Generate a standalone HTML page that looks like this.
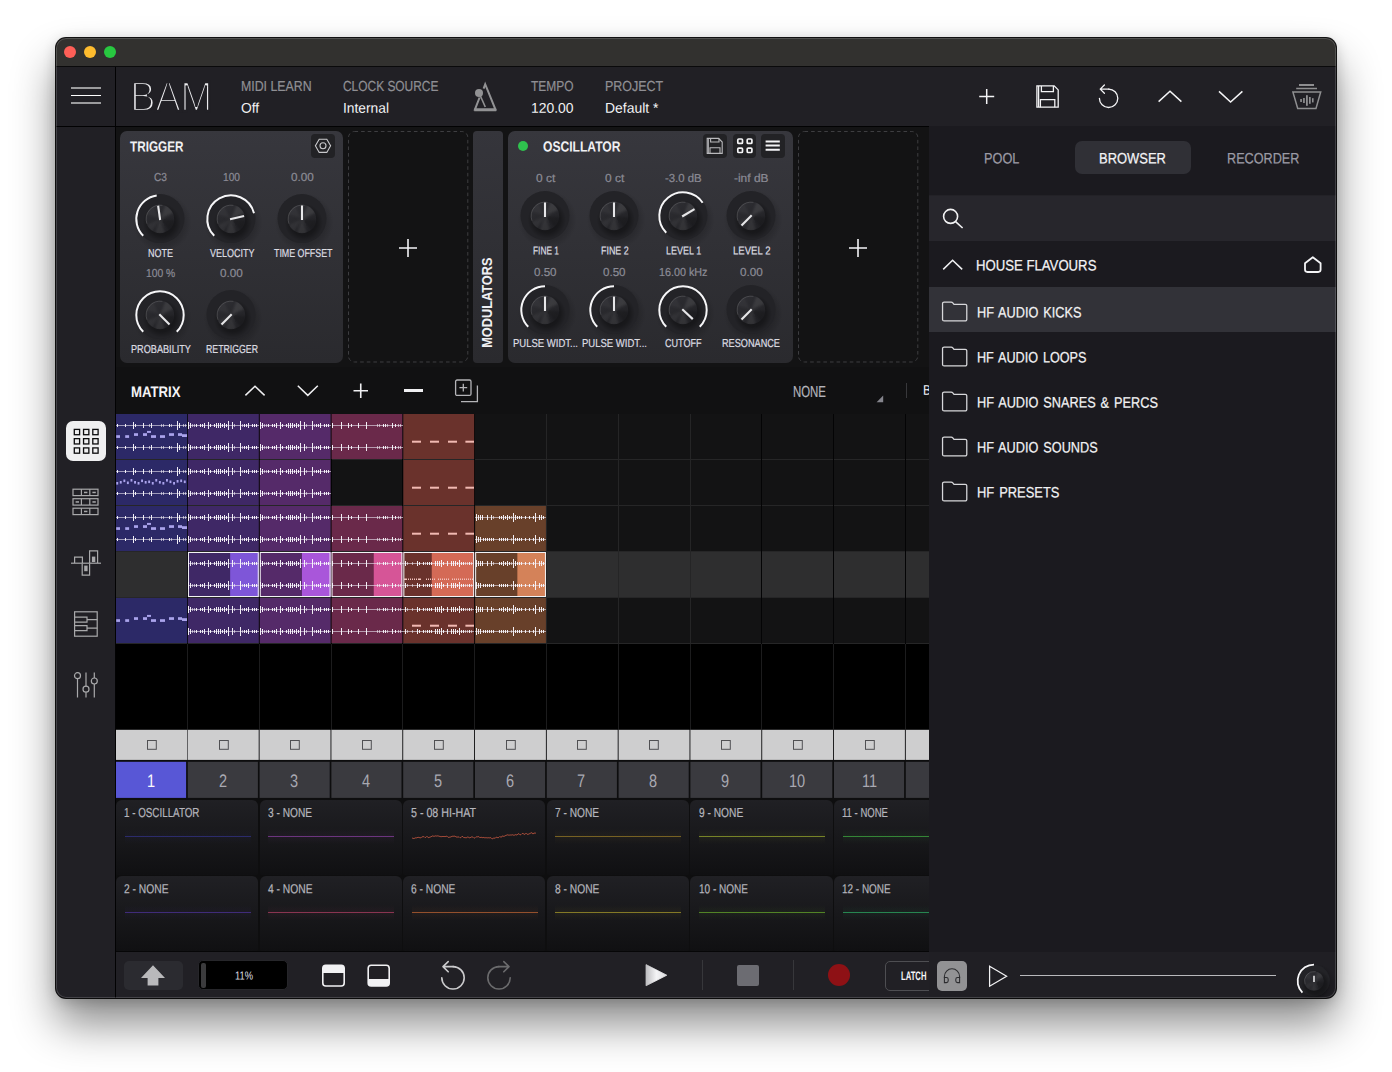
<!DOCTYPE html>
<html lang="en"><head><meta charset="utf-8"><title>BAM</title>
<style>
html,body{margin:0;padding:0;background:#fff;}
body{width:1392px;height:1072px;position:relative;overflow:hidden;font-family:"Liberation Sans",sans-serif;}
.b{position:absolute;display:block;}
.m{-webkit-text-stroke:0.22px currentColor;}
.t{position:absolute;display:block;white-space:nowrap;transform-origin:0 0;font-family:"Liberation Sans",sans-serif;}
#win{position:absolute;border-radius:10px;box-shadow:0 0 0 1px rgba(0,0,0,.92),0 26px 44px rgba(0,0,0,.46),0 3px 14px rgba(0,0,0,.19);background:#1e1d22;}
#app{position:absolute;border-radius:10px;overflow:hidden;}

</style></head><body>
<div id="win" style="left:56px;top:38px;width:1280px;height:960px"></div>
<div id="app" style="left:56px;top:38px;width:1280px;height:960px">
<div class="b" style="left:-56px;top:-38px;width:1392px;height:1072px">
<div class="b" style="left:55px;top:37px;width:1282px;height:29px;background:#32312f;"></div>
<div class="b" style="left:55px;top:66px;width:1282px;height:1px;background:#0a0a0b;"></div>
<div class="b" style="left:64px;top:46px;width:12px;height:12px;background:#fe5f57;border-radius:50%"></div>
<div class="b" style="left:84px;top:46px;width:12px;height:12px;background:#febc2e;border-radius:50%"></div>
<div class="b" style="left:104px;top:46px;width:12px;height:12px;background:#28c840;border-radius:50%"></div>
<div class="b" style="left:55px;top:67px;width:1282px;height:932px;background:#212025;"></div>
<div class="b" style="left:929px;top:126px;width:407px;height:872px;background:#1b1a1f;"></div>
<div class="b" style="left:55px;top:67px;width:60px;height:932px;background:#212025;"></div>
<div class="b" style="left:115px;top:67px;width:1px;height:931px;background:#020203;"></div>
<div class="b" style="left:55px;top:126px;width:874px;height:1px;background:#020203;"></div>
<div class="b" style="left:71px;top:87px;width:30px;height:2px;background:#9b9b9d;"></div>
<div class="b" style="left:71px;top:94.6px;width:30px;height:1.6px;background:#ffffff;"></div>
<div class="b" style="left:71px;top:102px;width:30px;height:2px;background:#9b9b9d;"></div>
<span class="t" id="bam" style="left:129.5px;top:74.55px;font-size:43.2px;line-height:43.2px;color:#ececef;transform:scaleX(0.892);letter-spacing:-0.6px;-webkit-text-stroke:2.3px #212025;">BAM</span>
<span class="t m" style="left:241.25px;top:78.035px;font-size:14.53px;line-height:14.53px;color:#8f8f94;transform:translate(0,1.00px) scaleX(0.8505) rotate(0.05deg);">MIDI LEARN</span>
<span class="t" style="left:241.25px;top:100.250px;font-size:14.1px;line-height:14.1px;color:#f2f2f4;transform:translate(0,0.70px) scaleX(0.9806) rotate(0.05deg);">Off</span>
<span class="t m" style="left:343.00px;top:78.035px;font-size:14.53px;line-height:14.53px;color:#8f8f94;transform:translate(0,1.00px) scaleX(0.8216) rotate(0.05deg);">CLOCK SOURCE</span>
<span class="t" style="left:343.00px;top:100.250px;font-size:14.1px;line-height:14.1px;color:#f2f2f4;transform:translate(0,0.70px) scaleX(0.9782) rotate(0.05deg);">Internal</span>
<span class="t m" style="left:530.50px;top:78.035px;font-size:14.53px;line-height:14.53px;color:#8f8f94;transform:translate(0,1.00px) scaleX(0.8228) rotate(0.05deg);">TEMPO</span>
<span class="t" style="left:530.50px;top:100.250px;font-size:14.1px;line-height:14.1px;color:#f2f2f4;transform:translate(0,0.70px) scaleX(0.9850) rotate(0.05deg);">120.00</span>
<span class="t m" style="left:605.00px;top:78.035px;font-size:14.53px;line-height:14.53px;color:#8f8f94;transform:translate(0,1.00px) scaleX(0.8594) rotate(0.05deg);">PROJECT</span>
<span class="t" style="left:605.00px;top:100.250px;font-size:14.1px;line-height:14.1px;color:#f2f2f4;transform:translate(0,0.70px) scaleX(0.9894) rotate(0.05deg);">Default *</span>
<svg class="b" style="left:470px;top:80px;" width="32" height="34" viewBox="0 0 32 34"><g fill="none" stroke="#929294" stroke-linejoin="miter"><path d="M9.6 17.5 L4.9 29.6 H25.5 L15.2 4.2 L13.6 8.6" stroke-width="2"/><path d="M4.2 29.9 H26.2" stroke-width="2.6"/><path d="M10.2 15.5 L15.3 27" stroke-width="1.6"/></g><circle cx="9" cy="12.9" r="4" fill="#929294"/></svg>
<svg class="b" style="left:976px;top:86px;" width="22" height="22" viewBox="0 0 22 22"><path d="M3.2 10.6h15M10.7 3.1v15" stroke="#f4f4f6" stroke-width="1.5" fill="none"/></svg>
<svg class="b" style="left:1034px;top:83px;" width="28" height="28" viewBox="0 0 28 28"><g fill="none" stroke="#f4f4f6" stroke-width="1.3" stroke-linejoin="miter"><path d="M2.9 2.9H20.2L24.2 6.9V24.2H2.9Z"/><path d="M4.6 3V24"/><path d="M7.4 2.9V8.6H19.4V2.9"/><path d="M6.4 24.2V16.6H20.8V24.2"/></g></svg>
<svg class="b" style="left:1094px;top:82px;" width="30" height="30" viewBox="0 0 30 30"><g fill="none" stroke="#f4f4f6" stroke-width="1.3" stroke-linecap="round" stroke-linejoin="round"><path d="M14.6 7.1A9.2 9.2 0 1 1 5.4 16.3"/><path d="M15 7.1H6.2M10.4 3L6.2 7.1L10.4 11.2"/></g></svg>
<svg class="b" style="left:1154px;top:86px;" width="32" height="22" viewBox="0 0 32 22"><path d="M4.6 15.6L16 5.2L27.4 15.6" stroke="#f4f4f6" stroke-width="1.5" fill="none"/></svg>
<svg class="b" style="left:1214px;top:86px;" width="32" height="22" viewBox="0 0 32 22"><path d="M5 5.4L16.6 16L28.4 5.4" stroke="#f4f4f6" stroke-width="1.5" fill="none"/></svg>
<svg class="b" style="left:1288px;top:80px;" width="38" height="32" viewBox="0 0 38 32"><g fill="none" stroke="#8e8e90"><path d="M11 4.9H26" stroke-width="2"/><path d="M8.2 8.5H29" stroke-width="1.5"/><path d="M4.9 12H32.7L28 28.4H9.7Z" stroke-width="1.5"/></g><g fill="#8e8e90"><rect x="12.2" y="19" width="1.7" height="3"/><rect x="15.1" y="18" width="1.7" height="5"/><rect x="18" y="15.2" width="1.8" height="10.6"/><rect x="21" y="17" width="1.7" height="6.8"/><rect x="24" y="18.2" width="1.6" height="4.2"/></g></svg>
<div class="b" style="left:66px;top:421px;width:40px;height:40px;background:#efeff0;border-radius:7px"></div>
<svg class="b" style="left:66px;top:421px;" width="40" height="40" viewBox="0 0 40 40"><g fill="none" stroke="#0b0b0c" stroke-width="1.3"><rect x="8.30" y="8.40" width="5.3" height="5.3"/><rect x="17.55" y="8.40" width="5.3" height="5.3"/><rect x="26.80" y="8.40" width="5.3" height="5.3"/><rect x="8.30" y="17.65" width="5.3" height="5.3"/><rect x="17.55" y="17.65" width="5.3" height="5.3"/><rect x="26.80" y="17.65" width="5.3" height="5.3"/><rect x="8.30" y="26.90" width="5.3" height="5.3"/><rect x="17.55" y="26.90" width="5.3" height="5.3"/><rect x="26.80" y="26.90" width="5.3" height="5.3"/></g></svg>
<svg class="b" style="left:72px;top:488px;" width="28" height="28" viewBox="0 0 28 28"><g fill="none" stroke="#a9a9ab" stroke-width="1.2"><rect x="1" y="1.2" width="25" height="6.4"/><path d="M9.4 1.2v6.4M17.8 1.2v6.4"/><rect x="1" y="10.7" width="25" height="6.4"/><path d="M9.4 10.7v6.4M17.8 10.7v6.4"/><rect x="1" y="20.2" width="25" height="6.4"/><path d="M9.4 20.2v6.4M17.8 20.2v6.4"/><rect x="12.0" y="3.7" width="3.4" height="1.5" fill="#a9a9ab" stroke="none"/><rect x="20.4" y="3.7" width="3.4" height="1.5" fill="#a9a9ab" stroke="none"/><rect x="3.6" y="13.2" width="3.4" height="1.5" fill="#a9a9ab" stroke="none"/><rect x="20.4" y="13.2" width="3.4" height="1.5" fill="#a9a9ab" stroke="none"/><rect x="12.0" y="22.7" width="3.4" height="1.5" fill="#a9a9ab" stroke="none"/></g></svg>
<svg class="b" style="left:69px;top:548px;" width="34" height="30" viewBox="0 0 34 30"><g fill="none" stroke="#a9a9ab" stroke-width="1.2"><path d="M2 15.2H32"/><path d="M5.6 15V9.2H13.4V15"/><path d="M13.2 15.4V27.2H20.6V15.4"/><path d="M20.6 15V2.8H28.6V15"/></g><rect x="15.2" y="17.6" width="3.4" height="5.6" fill="#a9a9ab"/><rect x="22.9" y="8.6" width="3.4" height="5.4" fill="#a9a9ab"/></svg>
<svg class="b" style="left:72px;top:609px;" width="28" height="30" viewBox="0 0 28 30"><g fill="none" stroke="#a9a9ab" stroke-width="1.2"><rect x="2.6" y="2.8" width="22.6" height="24.4"/><path d="M2.6 8.2H15V13.2H2.6M15 10.7H25.2"/><path d="M2.6 16.7H15V21.6H2.6M15 19.1H25.2"/></g></svg>
<svg class="b" style="left:72px;top:670px;" width="28" height="30" viewBox="0 0 28 30"><g fill="none" stroke="#a9a9ab" stroke-width="1.2"><path d="M5.5 8.8V27.6M14 2.6V16.2M14 22.2V27.6M22.3 2.6V8M22.3 14V27.6"/><circle cx="5.5" cy="5.7" r="3"/><circle cx="14" cy="19.2" r="3"/><circle cx="22.3" cy="11" r="3"/></g></svg>
<div class="b" style="left:0;top:0;width:929px;height:1072px;overflow:hidden">
<div class="b" style="left:116px;top:127px;width:813.5px;height:240px;background:#131314;"></div>
<div class="b" style="left:120px;top:131px;width:223px;height:231.5px;background:;background:linear-gradient(180deg,#37373d 0%,#2a2a2e 100%);border-radius:7px;"></div>
<div class="b" style="left:473px;top:131px;width:30px;height:231.5px;background:;background:linear-gradient(180deg,#35353b 0%,#2a2a2e 100%);border-radius:4px;"></div>
<div class="b" style="left:508px;top:131px;width:284.5px;height:231.5px;background:;background:linear-gradient(180deg,#37373d 0%,#2a2a2e 100%);border-radius:7px;"></div>
<svg class="b" style="left:346.7px;top:130px;" width="122.3" height="234" viewBox="0 0 122.3 234"><rect x="1.5" y="1.5" width="119.3" height="230.5" rx="6" fill="none" stroke="#434346" stroke-width="0.9" stroke-dasharray="3.6 3"/></svg>
<svg class="b" style="left:796.7px;top:130px;" width="122.3" height="234" viewBox="0 0 122.3 234"><rect x="1.5" y="1.5" width="119.3" height="230.5" rx="6" fill="none" stroke="#434346" stroke-width="0.9" stroke-dasharray="3.6 3"/></svg>
<svg class="b" style="left:396.5px;top:236.5px;" width="22" height="22" viewBox="0 0 22 22"><path d="M2 11h18M11 2v18" stroke="#f4f4f6" stroke-width="1.6" fill="none"/></svg>
<svg class="b" style="left:846.5px;top:236.5px;" width="22" height="22" viewBox="0 0 22 22"><path d="M2 11h18M11 2v18" stroke="#f4f4f6" stroke-width="1.6" fill="none"/></svg>
<span class="t" style="left:130.00px;top:139.035px;font-size:14.53px;line-height:14.53px;color:#f0f0f3;transform:translate(0,0.50px) scaleX(0.8084) rotate(0.05deg);font-weight:bold;">TRIGGER</span>
<span class="t" style="left:542.50px;top:139.035px;font-size:14.53px;line-height:14.53px;color:#f0f0f3;transform:translate(0,0.50px) scaleX(0.8328) rotate(0.05deg);font-weight:bold;">OSCILLATOR</span>
<div class="b" style="left:517.7px;top:141px;width:10px;height:10px;background:#2fc24e;border-radius:50%"></div>
<div class="b" style="left:311px;top:134px;width:24px;height:23.5px;background:#222225;border-radius:4px"></div>
<svg class="b" style="left:311px;top:134px;" width="24" height="24" viewBox="0 0 24 24"><g fill="none" stroke="#c9c9cc" stroke-width="1.1"><path d="M8.2 5.2H15.8L19.6 11.8L15.8 18.4H8.2L4.4 11.8Z"/><circle cx="12" cy="11.8" r="3"/></g></svg>
<div class="b" style="left:703.4px;top:134px;width:23.6px;height:23.5px;background:#222225;border-radius:4px"></div>
<div class="b" style="left:732.5px;top:134px;width:23.6px;height:23.5px;background:#222225;border-radius:4px"></div>
<div class="b" style="left:761.4px;top:134px;width:23.6px;height:23.5px;background:#222225;border-radius:4px"></div>
<svg class="b" style="left:703.4px;top:134px;" width="24" height="24" viewBox="0 0 24 24"><g fill="none" stroke="#b9b9bc" stroke-width="1.1"><path d="M4.2 4.4H15.6L19.2 8V19.4H4.2Z"/><path d="M5.3 4.4V19.4"/><path d="M7.6 4.4V8H16V4.4"/><path d="M7 19.4V13.8H17V19.4"/></g></svg>
<svg class="b" style="left:732.5px;top:134px;" width="24" height="24" viewBox="0 0 24 24"><g fill="none" stroke="#f4f4f6" stroke-width="1.7"><rect x="4.8" y="5" width="4.7" height="4.4" rx="1"/><rect x="4.8" y="14.1" width="4.7" height="4.4" rx="1"/><rect x="14.2" y="5" width="4.7" height="4.4" rx="1"/><rect x="14.2" y="14.1" width="4.7" height="4.4" rx="1"/></g></svg>
<svg class="b" style="left:761.4px;top:134px;" width="24" height="24" viewBox="0 0 24 24"><path d="M4.6 7.6H18.8M4.6 11.6H18.8M4.6 15.7H18.8" stroke="#f4f4f6" stroke-width="2" fill="none"/></svg>
<span class="t" style="left:441.25px;top:294.92px;width:90.5px;font-size:15.26px;line-height:15.26px;color:#f0f0f3;font-weight:bold;transform-origin:50% 50%;transform:rotate(-90deg) scaleX(0.8383);text-align:center;"><span style="display:inline-block;width:107.96px;margin-left:-8.73px;text-align:left">MODULATORS</span></span>
<svg width="0" height="0" style="position:absolute"><defs>
<radialGradient id="kd" cx="50%" cy="50%" r="50%"><stop offset="0" stop-color="#1f1f22"/><stop offset=".8" stop-color="#222226"/><stop offset=".93" stop-color="#242428" stop-opacity=".8"/><stop offset="1" stop-color="#28282c" stop-opacity="0"/></radialGradient>
<radialGradient id="ks" cx="50%" cy="50%" r="50%"><stop offset="0" stop-color="#000" stop-opacity=".55"/><stop offset=".7" stop-color="#000" stop-opacity=".3"/><stop offset="1" stop-color="#000" stop-opacity="0"/></radialGradient>
<linearGradient id="kc" x1="0.2" y1="0" x2="0.8" y2="1"><stop offset="0" stop-color="#2e2e33"/><stop offset=".5" stop-color="#27272b"/><stop offset="1" stop-color="#202024"/></linearGradient>
<radialGradient id="ks2" cx="50%" cy="50%" r="50%"><stop offset="0" stop-color="#000" stop-opacity=".26"/><stop offset=".74" stop-color="#000" stop-opacity=".15"/><stop offset="1" stop-color="#000" stop-opacity="0"/></radialGradient>
<filter id="kb" x="-20%" y="-20%" width="140%" height="140%"><feGaussianBlur stdDeviation="0.9"/></filter>
<linearGradient id="kr" x1="0" y1="0" x2="0" y2="1"><stop offset="0" stop-color="#4a4a50"/><stop offset="1" stop-color="#1a1a1c"/></linearGradient>
</defs></svg>
<svg class="b" style="left:124.0px;top:182.5px;" width="72" height="72" viewBox="0 0 72 72"><defs><clipPath id="k160_218"><circle cx="36.0" cy="36.0" r="14.2"/></clipPath></defs><circle cx="38.2" cy="39.4" r="29.5" fill="url(#ks2)"/><circle cx="36.0" cy="35.6" r="24.5" fill="#232327"/><circle cx="37.8" cy="39.6" r="19.2" fill="url(#ks)"/><circle cx="36.0" cy="36.0" r="14.2" fill="url(#kc)"/><g clip-path="url(#k160_218)"><g filter="url(#kb)" fill="#fff"><path d="M36.0 36.0L41.69 21.91A15.2 15.2 0 0 1 49.89 29.82Z" opacity=".085"/><path d="M36.0 36.0L41.20 50.28A15.2 15.2 0 0 1 30.80 50.28Z" opacity=".07"/><path d="M36.0 36.0L27.95 48.89A15.2 15.2 0 0 1 22.11 42.18Z" opacity=".05"/><path d="M36.0 36.0L21.72 30.80A15.2 15.2 0 0 1 28.40 22.84Z" opacity=".035"/><path d="M36.0 36.0L51.14 37.32A15.2 15.2 0 0 1 45.77 47.64Z" fill="#000" opacity=".18"/></g></g><path d="M22.94 40.75A13.899999999999999 13.899999999999999 0 0 1 38.41 22.31" fill="none" stroke="#fff" stroke-opacity=".2" stroke-width="0.7"/><path d="M19.24 52.76A23.7 23.7 0 0 1 32.70 12.53" fill="none" stroke="#f6f6f8" stroke-width="2"/><path d="M36.14 36.99L34.14 22.73" stroke="#e6e6e8" stroke-width="2.1" fill="none"/></svg>
<svg class="b" style="left:194.8px;top:182.5px;" width="72" height="72" viewBox="0 0 72 72"><defs><clipPath id="k230_218"><circle cx="36.0" cy="36.0" r="14.2"/></clipPath></defs><circle cx="38.2" cy="39.4" r="29.5" fill="url(#ks2)"/><circle cx="36.0" cy="35.6" r="24.5" fill="#232327"/><circle cx="37.8" cy="39.6" r="19.2" fill="url(#ks)"/><circle cx="36.0" cy="36.0" r="14.2" fill="url(#kc)"/><g clip-path="url(#k230_218)"><g filter="url(#kb)" fill="#fff"><path d="M36.0 36.0L41.69 21.91A15.2 15.2 0 0 1 49.89 29.82Z" opacity=".085"/><path d="M36.0 36.0L41.20 50.28A15.2 15.2 0 0 1 30.80 50.28Z" opacity=".07"/><path d="M36.0 36.0L27.95 48.89A15.2 15.2 0 0 1 22.11 42.18Z" opacity=".05"/><path d="M36.0 36.0L21.72 30.80A15.2 15.2 0 0 1 28.40 22.84Z" opacity=".035"/><path d="M36.0 36.0L51.14 37.32A15.2 15.2 0 0 1 45.77 47.64Z" fill="#000" opacity=".18"/></g></g><path d="M22.94 40.75A13.899999999999999 13.899999999999999 0 0 1 38.41 22.31" fill="none" stroke="#fff" stroke-opacity=".2" stroke-width="0.7"/><path d="M19.24 52.76A23.7 23.7 0 1 1 59.00 30.27" fill="none" stroke="#f6f6f8" stroke-width="2"/><path d="M35.03 36.22L49.06 32.99" stroke="#e6e6e8" stroke-width="2.1" fill="none"/></svg>
<svg class="b" style="left:265.8px;top:182.5px;" width="72" height="72" viewBox="0 0 72 72"><defs><clipPath id="k301_218"><circle cx="36.0" cy="36.0" r="14.2"/></clipPath></defs><circle cx="38.2" cy="39.4" r="29.5" fill="url(#ks2)"/><circle cx="36.0" cy="35.6" r="24.5" fill="#232327"/><circle cx="37.8" cy="39.6" r="19.2" fill="url(#ks)"/><circle cx="36.0" cy="36.0" r="14.2" fill="url(#kc)"/><g clip-path="url(#k301_218)"><g filter="url(#kb)" fill="#fff"><path d="M36.0 36.0L41.69 21.91A15.2 15.2 0 0 1 49.89 29.82Z" opacity=".085"/><path d="M36.0 36.0L41.20 50.28A15.2 15.2 0 0 1 30.80 50.28Z" opacity=".07"/><path d="M36.0 36.0L27.95 48.89A15.2 15.2 0 0 1 22.11 42.18Z" opacity=".05"/><path d="M36.0 36.0L21.72 30.80A15.2 15.2 0 0 1 28.40 22.84Z" opacity=".035"/><path d="M36.0 36.0L51.14 37.32A15.2 15.2 0 0 1 45.77 47.64Z" fill="#000" opacity=".18"/></g></g><path d="M22.94 40.75A13.899999999999999 13.899999999999999 0 0 1 38.41 22.31" fill="none" stroke="#fff" stroke-opacity=".2" stroke-width="0.7"/><path d="M36.00 37.00L36.00 22.60" stroke="#e6e6e8" stroke-width="2.1" fill="none"/></svg>
<svg class="b" style="left:124.0px;top:279.0px;" width="72" height="72" viewBox="0 0 72 72"><defs><clipPath id="k160_315"><circle cx="36.0" cy="36.0" r="14.2"/></clipPath></defs><circle cx="38.2" cy="39.4" r="29.5" fill="url(#ks2)"/><circle cx="36.0" cy="35.6" r="24.5" fill="#232327"/><circle cx="37.8" cy="39.6" r="19.2" fill="url(#ks)"/><circle cx="36.0" cy="36.0" r="14.2" fill="url(#kc)"/><g clip-path="url(#k160_315)"><g filter="url(#kb)" fill="#fff"><path d="M36.0 36.0L41.69 21.91A15.2 15.2 0 0 1 49.89 29.82Z" opacity=".085"/><path d="M36.0 36.0L41.20 50.28A15.2 15.2 0 0 1 30.80 50.28Z" opacity=".07"/><path d="M36.0 36.0L27.95 48.89A15.2 15.2 0 0 1 22.11 42.18Z" opacity=".05"/><path d="M36.0 36.0L21.72 30.80A15.2 15.2 0 0 1 28.40 22.84Z" opacity=".035"/><path d="M36.0 36.0L51.14 37.32A15.2 15.2 0 0 1 45.77 47.64Z" fill="#000" opacity=".18"/></g></g><path d="M22.94 40.75A13.899999999999999 13.899999999999999 0 0 1 38.41 22.31" fill="none" stroke="#fff" stroke-opacity=".2" stroke-width="0.7"/><path d="M19.24 52.76A23.7 23.7 0 1 1 52.76 52.76" fill="none" stroke="#f6f6f8" stroke-width="2"/><path d="M35.29 35.29L45.48 45.48" stroke="#e6e6e8" stroke-width="2.1" fill="none"/></svg>
<svg class="b" style="left:194.8px;top:279.0px;" width="72" height="72" viewBox="0 0 72 72"><defs><clipPath id="k230_315"><circle cx="36.0" cy="36.0" r="14.2"/></clipPath></defs><circle cx="38.2" cy="39.4" r="29.5" fill="url(#ks2)"/><circle cx="36.0" cy="35.6" r="24.5" fill="#232327"/><circle cx="37.8" cy="39.6" r="19.2" fill="url(#ks)"/><circle cx="36.0" cy="36.0" r="14.2" fill="url(#kc)"/><g clip-path="url(#k230_315)"><g filter="url(#kb)" fill="#fff"><path d="M36.0 36.0L41.69 21.91A15.2 15.2 0 0 1 49.89 29.82Z" opacity=".085"/><path d="M36.0 36.0L41.20 50.28A15.2 15.2 0 0 1 30.80 50.28Z" opacity=".07"/><path d="M36.0 36.0L27.95 48.89A15.2 15.2 0 0 1 22.11 42.18Z" opacity=".05"/><path d="M36.0 36.0L21.72 30.80A15.2 15.2 0 0 1 28.40 22.84Z" opacity=".035"/><path d="M36.0 36.0L51.14 37.32A15.2 15.2 0 0 1 45.77 47.64Z" fill="#000" opacity=".18"/></g></g><path d="M22.94 40.75A13.899999999999999 13.899999999999999 0 0 1 38.41 22.31" fill="none" stroke="#fff" stroke-opacity=".2" stroke-width="0.7"/><path d="M36.71 35.29L26.52 45.48" stroke="#e6e6e8" stroke-width="2.1" fill="none"/></svg>
<span class="t m" style="left:153.50px;top:170.985px;font-size:11.63px;line-height:11.63px;color:#8b8b95;transform:translate(0,0.00px) scaleX(0.8733) rotate(0.05deg);">C3</span>
<span class="t m" style="left:222.50px;top:170.985px;font-size:11.63px;line-height:11.63px;color:#8b8b95;transform:translate(0,0.00px) scaleX(0.8753) rotate(0.05deg);">100</span>
<span class="t m" style="left:291.02px;top:170.985px;font-size:11.63px;line-height:11.63px;color:#8b8b95;transform:translate(0,0.00px) scaleX(1.0057) rotate(0.05deg);">0.00</span>
<span class="t m" style="left:145.78px;top:266.985px;font-size:11.63px;line-height:11.63px;color:#8b8b95;transform:translate(0,0.00px) scaleX(0.8871) rotate(0.05deg);">100 %</span>
<span class="t m" style="left:219.82px;top:266.985px;font-size:11.63px;line-height:11.63px;color:#8b8b95;transform:translate(0,0.00px) scaleX(1.0057) rotate(0.05deg);">0.00</span>
<span class="t m" style="left:148.00px;top:246.985px;font-size:11.63px;line-height:11.63px;color:#dcdce1;transform:translate(0,0.00px) scaleX(0.7732) rotate(0.05deg);">NOTE</span>
<span class="t m" style="left:209.50px;top:246.985px;font-size:11.63px;line-height:11.63px;color:#dcdce1;transform:translate(0,0.00px) scaleX(0.7738) rotate(0.05deg);">VELOCITY</span>
<span class="t m" style="left:273.50px;top:246.985px;font-size:11.63px;line-height:11.63px;color:#dcdce1;transform:translate(0,0.00px) scaleX(0.7610) rotate(0.05deg);">TIME OFFSET</span>
<span class="t m" style="left:130.50px;top:342.985px;font-size:11.63px;line-height:11.63px;color:#dcdce1;transform:translate(0,0.00px) scaleX(0.7864) rotate(0.05deg);">PROBABILITY</span>
<span class="t m" style="left:206.00px;top:342.985px;font-size:11.63px;line-height:11.63px;color:#dcdce1;transform:translate(0,0.00px) scaleX(0.7521) rotate(0.05deg);">RETRIGGER</span>
<svg class="b" style="left:509.0px;top:180.0px;" width="72" height="72" viewBox="0 0 72 72"><defs><clipPath id="k545_216"><circle cx="36.0" cy="36.0" r="14.2"/></clipPath></defs><circle cx="38.2" cy="39.4" r="29.5" fill="url(#ks2)"/><circle cx="36.0" cy="35.6" r="24.5" fill="#232327"/><circle cx="37.8" cy="39.6" r="19.2" fill="url(#ks)"/><circle cx="36.0" cy="36.0" r="14.2" fill="url(#kc)"/><g clip-path="url(#k545_216)"><g filter="url(#kb)" fill="#fff"><path d="M36.0 36.0L41.69 21.91A15.2 15.2 0 0 1 49.89 29.82Z" opacity=".085"/><path d="M36.0 36.0L41.20 50.28A15.2 15.2 0 0 1 30.80 50.28Z" opacity=".07"/><path d="M36.0 36.0L27.95 48.89A15.2 15.2 0 0 1 22.11 42.18Z" opacity=".05"/><path d="M36.0 36.0L21.72 30.80A15.2 15.2 0 0 1 28.40 22.84Z" opacity=".035"/><path d="M36.0 36.0L51.14 37.32A15.2 15.2 0 0 1 45.77 47.64Z" fill="#000" opacity=".18"/></g></g><path d="M22.94 40.75A13.899999999999999 13.899999999999999 0 0 1 38.41 22.31" fill="none" stroke="#fff" stroke-opacity=".2" stroke-width="0.7"/><path d="M36.00 37.00L36.00 22.60" stroke="#e6e6e8" stroke-width="2.1" fill="none"/></svg>
<svg class="b" style="left:578.0px;top:180.0px;" width="72" height="72" viewBox="0 0 72 72"><defs><clipPath id="k614_216"><circle cx="36.0" cy="36.0" r="14.2"/></clipPath></defs><circle cx="38.2" cy="39.4" r="29.5" fill="url(#ks2)"/><circle cx="36.0" cy="35.6" r="24.5" fill="#232327"/><circle cx="37.8" cy="39.6" r="19.2" fill="url(#ks)"/><circle cx="36.0" cy="36.0" r="14.2" fill="url(#kc)"/><g clip-path="url(#k614_216)"><g filter="url(#kb)" fill="#fff"><path d="M36.0 36.0L41.69 21.91A15.2 15.2 0 0 1 49.89 29.82Z" opacity=".085"/><path d="M36.0 36.0L41.20 50.28A15.2 15.2 0 0 1 30.80 50.28Z" opacity=".07"/><path d="M36.0 36.0L27.95 48.89A15.2 15.2 0 0 1 22.11 42.18Z" opacity=".05"/><path d="M36.0 36.0L21.72 30.80A15.2 15.2 0 0 1 28.40 22.84Z" opacity=".035"/><path d="M36.0 36.0L51.14 37.32A15.2 15.2 0 0 1 45.77 47.64Z" fill="#000" opacity=".18"/></g></g><path d="M22.94 40.75A13.899999999999999 13.899999999999999 0 0 1 38.41 22.31" fill="none" stroke="#fff" stroke-opacity=".2" stroke-width="0.7"/><path d="M36.00 37.00L36.00 22.60" stroke="#e6e6e8" stroke-width="2.1" fill="none"/></svg>
<svg class="b" style="left:647.0px;top:180.0px;" width="72" height="72" viewBox="0 0 72 72"><defs><clipPath id="k683_216"><circle cx="36.0" cy="36.0" r="14.2"/></clipPath></defs><circle cx="38.2" cy="39.4" r="29.5" fill="url(#ks2)"/><circle cx="36.0" cy="35.6" r="24.5" fill="#232327"/><circle cx="37.8" cy="39.6" r="19.2" fill="url(#ks)"/><circle cx="36.0" cy="36.0" r="14.2" fill="url(#kc)"/><g clip-path="url(#k683_216)"><g filter="url(#kb)" fill="#fff"><path d="M36.0 36.0L41.69 21.91A15.2 15.2 0 0 1 49.89 29.82Z" opacity=".085"/><path d="M36.0 36.0L41.20 50.28A15.2 15.2 0 0 1 30.80 50.28Z" opacity=".07"/><path d="M36.0 36.0L27.95 48.89A15.2 15.2 0 0 1 22.11 42.18Z" opacity=".05"/><path d="M36.0 36.0L21.72 30.80A15.2 15.2 0 0 1 28.40 22.84Z" opacity=".035"/><path d="M36.0 36.0L51.14 37.32A15.2 15.2 0 0 1 45.77 47.64Z" fill="#000" opacity=".18"/></g></g><path d="M22.94 40.75A13.899999999999999 13.899999999999999 0 0 1 38.41 22.31" fill="none" stroke="#fff" stroke-opacity=".2" stroke-width="0.7"/><path d="M19.24 52.76A23.7 23.7 0 1 1 55.65 22.75" fill="none" stroke="#f6f6f8" stroke-width="2"/><path d="M35.14 36.52L47.49 29.10" stroke="#e6e6e8" stroke-width="2.1" fill="none"/></svg>
<svg class="b" style="left:715.0px;top:180.0px;" width="72" height="72" viewBox="0 0 72 72"><defs><clipPath id="k751_216"><circle cx="36.0" cy="36.0" r="14.2"/></clipPath></defs><circle cx="38.2" cy="39.4" r="29.5" fill="url(#ks2)"/><circle cx="36.0" cy="35.6" r="24.5" fill="#232327"/><circle cx="37.8" cy="39.6" r="19.2" fill="url(#ks)"/><circle cx="36.0" cy="36.0" r="14.2" fill="url(#kc)"/><g clip-path="url(#k751_216)"><g filter="url(#kb)" fill="#fff"><path d="M36.0 36.0L41.69 21.91A15.2 15.2 0 0 1 49.89 29.82Z" opacity=".085"/><path d="M36.0 36.0L41.20 50.28A15.2 15.2 0 0 1 30.80 50.28Z" opacity=".07"/><path d="M36.0 36.0L27.95 48.89A15.2 15.2 0 0 1 22.11 42.18Z" opacity=".05"/><path d="M36.0 36.0L21.72 30.80A15.2 15.2 0 0 1 28.40 22.84Z" opacity=".035"/><path d="M36.0 36.0L51.14 37.32A15.2 15.2 0 0 1 45.77 47.64Z" fill="#000" opacity=".18"/></g></g><path d="M22.94 40.75A13.899999999999999 13.899999999999999 0 0 1 38.41 22.31" fill="none" stroke="#fff" stroke-opacity=".2" stroke-width="0.7"/><path d="M36.71 35.29L26.52 45.48" stroke="#e6e6e8" stroke-width="2.1" fill="none"/></svg>
<svg class="b" style="left:509.0px;top:274.0px;" width="72" height="72" viewBox="0 0 72 72"><defs><clipPath id="k545_310"><circle cx="36.0" cy="36.0" r="14.2"/></clipPath></defs><circle cx="38.2" cy="39.4" r="29.5" fill="url(#ks2)"/><circle cx="36.0" cy="35.6" r="24.5" fill="#232327"/><circle cx="37.8" cy="39.6" r="19.2" fill="url(#ks)"/><circle cx="36.0" cy="36.0" r="14.2" fill="url(#kc)"/><g clip-path="url(#k545_310)"><g filter="url(#kb)" fill="#fff"><path d="M36.0 36.0L41.69 21.91A15.2 15.2 0 0 1 49.89 29.82Z" opacity=".085"/><path d="M36.0 36.0L41.20 50.28A15.2 15.2 0 0 1 30.80 50.28Z" opacity=".07"/><path d="M36.0 36.0L27.95 48.89A15.2 15.2 0 0 1 22.11 42.18Z" opacity=".05"/><path d="M36.0 36.0L21.72 30.80A15.2 15.2 0 0 1 28.40 22.84Z" opacity=".035"/><path d="M36.0 36.0L51.14 37.32A15.2 15.2 0 0 1 45.77 47.64Z" fill="#000" opacity=".18"/></g></g><path d="M22.94 40.75A13.899999999999999 13.899999999999999 0 0 1 38.41 22.31" fill="none" stroke="#fff" stroke-opacity=".2" stroke-width="0.7"/><path d="M19.24 52.76A23.7 23.7 0 0 1 36.00 12.30" fill="none" stroke="#f6f6f8" stroke-width="2"/><path d="M36.00 37.00L36.00 22.60" stroke="#e6e6e8" stroke-width="2.1" fill="none"/></svg>
<svg class="b" style="left:578.0px;top:274.0px;" width="72" height="72" viewBox="0 0 72 72"><defs><clipPath id="k614_310"><circle cx="36.0" cy="36.0" r="14.2"/></clipPath></defs><circle cx="38.2" cy="39.4" r="29.5" fill="url(#ks2)"/><circle cx="36.0" cy="35.6" r="24.5" fill="#232327"/><circle cx="37.8" cy="39.6" r="19.2" fill="url(#ks)"/><circle cx="36.0" cy="36.0" r="14.2" fill="url(#kc)"/><g clip-path="url(#k614_310)"><g filter="url(#kb)" fill="#fff"><path d="M36.0 36.0L41.69 21.91A15.2 15.2 0 0 1 49.89 29.82Z" opacity=".085"/><path d="M36.0 36.0L41.20 50.28A15.2 15.2 0 0 1 30.80 50.28Z" opacity=".07"/><path d="M36.0 36.0L27.95 48.89A15.2 15.2 0 0 1 22.11 42.18Z" opacity=".05"/><path d="M36.0 36.0L21.72 30.80A15.2 15.2 0 0 1 28.40 22.84Z" opacity=".035"/><path d="M36.0 36.0L51.14 37.32A15.2 15.2 0 0 1 45.77 47.64Z" fill="#000" opacity=".18"/></g></g><path d="M22.94 40.75A13.899999999999999 13.899999999999999 0 0 1 38.41 22.31" fill="none" stroke="#fff" stroke-opacity=".2" stroke-width="0.7"/><path d="M19.24 52.76A23.7 23.7 0 0 1 36.00 12.30" fill="none" stroke="#f6f6f8" stroke-width="2"/><path d="M36.00 37.00L36.00 22.60" stroke="#e6e6e8" stroke-width="2.1" fill="none"/></svg>
<svg class="b" style="left:647.0px;top:274.0px;" width="72" height="72" viewBox="0 0 72 72"><defs><clipPath id="k683_310"><circle cx="36.0" cy="36.0" r="14.2"/></clipPath></defs><circle cx="38.2" cy="39.4" r="29.5" fill="url(#ks2)"/><circle cx="36.0" cy="35.6" r="24.5" fill="#232327"/><circle cx="37.8" cy="39.6" r="19.2" fill="url(#ks)"/><circle cx="36.0" cy="36.0" r="14.2" fill="url(#kc)"/><g clip-path="url(#k683_310)"><g filter="url(#kb)" fill="#fff"><path d="M36.0 36.0L41.69 21.91A15.2 15.2 0 0 1 49.89 29.82Z" opacity=".085"/><path d="M36.0 36.0L41.20 50.28A15.2 15.2 0 0 1 30.80 50.28Z" opacity=".07"/><path d="M36.0 36.0L27.95 48.89A15.2 15.2 0 0 1 22.11 42.18Z" opacity=".05"/><path d="M36.0 36.0L21.72 30.80A15.2 15.2 0 0 1 28.40 22.84Z" opacity=".035"/><path d="M36.0 36.0L51.14 37.32A15.2 15.2 0 0 1 45.77 47.64Z" fill="#000" opacity=".18"/></g></g><path d="M22.94 40.75A13.899999999999999 13.899999999999999 0 0 1 38.41 22.31" fill="none" stroke="#fff" stroke-opacity=".2" stroke-width="0.7"/><path d="M19.24 52.76A23.7 23.7 0 1 1 52.76 52.76" fill="none" stroke="#f6f6f8" stroke-width="2"/><path d="M35.27 35.32L45.80 45.14" stroke="#e6e6e8" stroke-width="2.1" fill="none"/></svg>
<svg class="b" style="left:715.0px;top:274.0px;" width="72" height="72" viewBox="0 0 72 72"><defs><clipPath id="k751_310"><circle cx="36.0" cy="36.0" r="14.2"/></clipPath></defs><circle cx="38.2" cy="39.4" r="29.5" fill="url(#ks2)"/><circle cx="36.0" cy="35.6" r="24.5" fill="#232327"/><circle cx="37.8" cy="39.6" r="19.2" fill="url(#ks)"/><circle cx="36.0" cy="36.0" r="14.2" fill="url(#kc)"/><g clip-path="url(#k751_310)"><g filter="url(#kb)" fill="#fff"><path d="M36.0 36.0L41.69 21.91A15.2 15.2 0 0 1 49.89 29.82Z" opacity=".085"/><path d="M36.0 36.0L41.20 50.28A15.2 15.2 0 0 1 30.80 50.28Z" opacity=".07"/><path d="M36.0 36.0L27.95 48.89A15.2 15.2 0 0 1 22.11 42.18Z" opacity=".05"/><path d="M36.0 36.0L21.72 30.80A15.2 15.2 0 0 1 28.40 22.84Z" opacity=".035"/><path d="M36.0 36.0L51.14 37.32A15.2 15.2 0 0 1 45.77 47.64Z" fill="#000" opacity=".18"/></g></g><path d="M22.94 40.75A13.899999999999999 13.899999999999999 0 0 1 38.41 22.31" fill="none" stroke="#fff" stroke-opacity=".2" stroke-width="0.7"/><path d="M36.71 35.29L26.52 45.48" stroke="#e6e6e8" stroke-width="2.1" fill="none"/></svg>
<span class="t m" style="left:535.77px;top:171.985px;font-size:11.63px;line-height:11.63px;color:#8b8b95;transform:translate(0,0.00px) scaleX(1.0281) rotate(0.05deg);">0 ct</span>
<span class="t m" style="left:604.77px;top:171.985px;font-size:11.63px;line-height:11.63px;color:#8b8b95;transform:translate(0,0.00px) scaleX(1.0281) rotate(0.05deg);">0 ct</span>
<span class="t m" style="left:665.02px;top:171.985px;font-size:11.63px;line-height:11.63px;color:#8b8b95;transform:translate(0,0.00px) scaleX(0.9798) rotate(0.05deg);">-3.0 dB</span>
<span class="t m" style="left:733.95px;top:171.985px;font-size:11.63px;line-height:11.63px;color:#8b8b95;transform:translate(0,0.00px) scaleX(1.0265) rotate(0.05deg);">-inf dB</span>
<span class="t m" style="left:533.95px;top:265.985px;font-size:11.63px;line-height:11.63px;color:#8b8b95;transform:translate(0,0.00px) scaleX(0.9947) rotate(0.05deg);">0.50</span>
<span class="t m" style="left:602.95px;top:265.985px;font-size:11.63px;line-height:11.63px;color:#8b8b95;transform:translate(0,0.00px) scaleX(0.9947) rotate(0.05deg);">0.50</span>
<span class="t m" style="left:658.95px;top:265.985px;font-size:11.63px;line-height:11.63px;color:#8b8b95;transform:translate(0,0.00px) scaleX(0.9257) rotate(0.05deg);">16.00 kHz</span>
<span class="t m" style="left:739.83px;top:265.985px;font-size:11.63px;line-height:11.63px;color:#8b8b95;transform:translate(0,0.00px) scaleX(1.0057) rotate(0.05deg);">0.00</span>
<span class="t m" style="left:533.00px;top:243.985px;font-size:11.63px;line-height:11.63px;color:#dcdce1;transform:translate(0,0.50px) scaleX(0.7188) rotate(0.05deg);">FINE 1</span>
<span class="t m" style="left:600.73px;top:243.985px;font-size:11.63px;line-height:11.63px;color:#dcdce1;transform:translate(0,0.50px) scaleX(0.7672) rotate(0.05deg);">FINE 2</span>
<span class="t m" style="left:666.12px;top:243.985px;font-size:11.63px;line-height:11.63px;color:#dcdce1;transform:translate(0,0.50px) scaleX(0.7752) rotate(0.05deg);">LEVEL 1</span>
<span class="t m" style="left:733.00px;top:243.985px;font-size:11.63px;line-height:11.63px;color:#dcdce1;transform:translate(0,0.50px) scaleX(0.8247) rotate(0.05deg);">LEVEL 2</span>
<span class="t m" style="left:512.50px;top:336.985px;font-size:11.63px;line-height:11.63px;color:#dcdce1;transform:translate(0,0.00px) scaleX(0.8177) rotate(0.05deg);">PULSE WIDT...</span>
<span class="t m" style="left:581.50px;top:336.985px;font-size:11.63px;line-height:11.63px;color:#dcdce1;transform:translate(0,0.00px) scaleX(0.8177) rotate(0.05deg);">PULSE WIDT...</span>
<span class="t m" style="left:665.00px;top:336.985px;font-size:11.63px;line-height:11.63px;color:#dcdce1;transform:translate(0,0.00px) scaleX(0.7778) rotate(0.05deg);">CUTOFF</span>
<span class="t m" style="left:722.00px;top:336.985px;font-size:11.63px;line-height:11.63px;color:#dcdce1;transform:translate(0,0.00px) scaleX(0.7872) rotate(0.05deg);">RESONANCE</span>
<div class="b" style="left:116px;top:367px;width:813.5px;height:47px;background:#111112;"></div>
<span class="t" style="left:131.00px;top:383.170px;font-size:15.26px;line-height:15.26px;color:#f4f4f6;transform:translate(0,1.00px) scaleX(0.8627) rotate(0.05deg);font-weight:bold;">MATRIX</span>
<svg class="b" style="left:240px;top:380px;" width="30" height="22" viewBox="0 0 30 22"><path d="M5.4 15.4L15 6.2L24.6 15.4" stroke="#f0f0f2" stroke-width="1.5" fill="none"/></svg>
<svg class="b" style="left:292px;top:380px;" width="32" height="22" viewBox="0 0 32 22"><path d="M5.8 5.8L15.8 15.4L25.8 5.8" stroke="#f0f0f2" stroke-width="1.5" fill="none"/></svg>
<svg class="b" style="left:350px;top:380px;" width="22" height="22" viewBox="0 0 22 22"><path d="M3.5 10.8H18M10.75 3.5V18" stroke="#f0f0f2" stroke-width="1.6" fill="none"/></svg>
<div class="b" style="left:404px;top:389.2px;width:19px;height:3px;background:#f0f0f2;"></div>
<svg class="b" style="left:452px;top:376px;" width="30" height="30" viewBox="0 0 30 30"><g fill="none" stroke="#b4b4b7" stroke-width="1.3"><rect x="3.6" y="4" width="15.4" height="15.4" rx="1.5"/><path d="M7.4 11.7H15.2M11.3 7.8V15.6"/><path d="M25.4 9.4V25.6H9"/></g></svg>
<span class="t m" style="left:792.90px;top:383.805px;font-size:15.99px;line-height:15.99px;color:#b3b3ba;transform:translate(0,0.00px) scaleX(0.7141) rotate(0.05deg);">NONE</span>
<svg class="b" style="left:875px;top:394px;" width="10" height="10" viewBox="0 0 10 10"><path d="M8.2 1.6V8.2H1.6Z" fill="#85858d"/></svg>
<div class="b" style="left:906px;top:383px;width:1px;height:14.6px;background:#38383b;"></div>
<span class="t" style="left:922.50px;top:383.325px;font-size:13.95px;line-height:13.95px;color:#f4f4f6;transform:translate(0,0.80px) scaleX(0.8600) rotate(0.05deg);">B</span>
<div class="b" style="left:116px;top:413.6px;width:813.5px;height:230.4px;background:#1d1d1e;"></div>
<div class="b" style="left:116px;top:414px;width:813.5px;height:45px;background:#131314;"></div>
<div class="b" style="left:116px;top:460px;width:813.5px;height:45px;background:#131314;"></div>
<div class="b" style="left:116px;top:506px;width:813.5px;height:45px;background:#131314;"></div>
<div class="b" style="left:116px;top:552px;width:813.5px;height:45px;background:#2e2e2f;"></div>
<div class="b" style="left:116px;top:598px;width:813.5px;height:45px;background:#131314;"></div>
<div class="b" style="left:116px;top:459px;width:813.5px;height:1px;background:#262627;"></div>
<div class="b" style="left:116px;top:505px;width:813.5px;height:1px;background:#262627;"></div>
<div class="b" style="left:116px;top:551px;width:813.5px;height:1px;background:#262627;"></div>
<div class="b" style="left:116px;top:597px;width:813.5px;height:1px;background:#262627;"></div>
<div class="b" style="left:116px;top:643px;width:813.5px;height:1px;background:#262627;"></div>
<div class="b" style="left:186.95px;top:413.6px;width:1.05px;height:230.4px;background:#040405;"></div>
<div class="b" style="left:258.75px;top:413.6px;width:1.05px;height:230.4px;background:#040405;"></div>
<div class="b" style="left:330.55px;top:413.6px;width:1.05px;height:230.4px;background:#040405;"></div>
<div class="b" style="left:402.35px;top:413.6px;width:1.05px;height:230.4px;background:#040405;"></div>
<div class="b" style="left:474.15px;top:413.6px;width:1.05px;height:230.4px;background:#040405;"></div>
<div class="b" style="left:545.95px;top:413.6px;width:1.05px;height:230.4px;background:#252526;"></div>
<div class="b" style="left:617.75px;top:413.6px;width:1.05px;height:230.4px;background:#252526;"></div>
<div class="b" style="left:689.55px;top:413.6px;width:1.05px;height:230.4px;background:#252526;"></div>
<div class="b" style="left:761.35px;top:413.6px;width:1.05px;height:230.4px;background:#040405;"></div>
<div class="b" style="left:833.15px;top:413.6px;width:1.05px;height:230.4px;background:#040405;"></div>
<div class="b" style="left:904.95px;top:413.6px;width:1.05px;height:230.4px;background:#040405;"></div>
<svg width="0" height="0" style="position:absolute"><defs>
<g id="wA"><path d="M0 0H71" stroke="#e6e2ee" stroke-width="1" fill="none" opacity=".62"/><path d="M33.5 -1.5v3M45.5 -1.5v3M47.5 -1.5v3M55.5 -1.5v3M67.5 -1.5v3M69.5 -1.5v3" stroke="#f6f4f9" stroke-width="1" fill="none" opacity=".6"/><path d="M1.5 -1.5v3M9.5 -1.5v3M17.5 -3.5v7M19.5 -1.5v3M27.5 -2.5v5M35.5 -2.5v5M53.5 -1.5v3M61.5 -4.5v9M63.5 -2.5v5" stroke="#f8f6fb" stroke-width="1" fill="none" opacity=".96"/></g>
<g id="wB"><path d="M0 0H71" stroke="#e6e2ee" stroke-width="1" fill="none" opacity=".62"/><path d="M4.5 -1.5v3M6.5 -1.5v3M46.5 -1.5v3M54.5 -1.5v3" stroke="#f6f4f9" stroke-width="1" fill="none" opacity=".6"/><path d="M0.5 -3.5v7M2.5 -2.5v5M8.5 -1.5v3M12.5 -1.5v3M14.5 -1.5v3M16.5 -2.5v5M20.5 -3.5v7M22.5 -1.5v3M26.5 -1.5v3M28.5 -2.5v5M30.5 -2.5v5M32.5 -2.5v5M34.5 -1.5v3M36.5 -2.5v5M38.5 -1.5v3M40.5 -4.5v9M44.5 -3.5v7M52.5 -4.5v9M56.5 -1.5v3M58.5 -1.5v3M60.5 -2.5v5M64.5 -1.5v3M66.5 -1.5v3M68.5 -1.5v3" stroke="#f8f6fb" stroke-width="1" fill="none" opacity=".96"/></g>
<g id="wC"><path d="M0 0H71" stroke="#e6e2ee" stroke-width="1" fill="none" opacity=".62"/><path d="M45.5 -1.5v3M47.5 -1.5v3M55.5 -1.5v3M66.5 -1.5v3M68.5 -1.5v3" stroke="#f6f4f9" stroke-width="1" fill="none" opacity=".6"/><path d="M0.5 -2.5v5M9.5 -3.5v7M16.5 -2.5v5M19.5 -1.5v3M26.5 -2.5v5M34.5 -3.5v7M51.5 -1.5v3M53.5 -1.5v3M60.5 -2.5v5M63.5 -1.5v3" stroke="#f8f6fb" stroke-width="1" fill="none" opacity=".96"/></g>
<g id="wD"><path d="M0 0H71" stroke="#e6e2ee" stroke-width="1" fill="none" opacity=".62"/><path d="M18.5 -1.5v3M36.5 -1.5v3" stroke="#f6f4f9" stroke-width="1" fill="none" opacity=".6"/><path d="M1.5 -3.5v7M3.5 -2.5v5M5.5 -2.5v5M7.5 -2.5v5M12.5 -2.5v5M16.5 -2.5v5M24.5 -1.5v3M26.5 -1.5v3M28.5 -2.5v5M30.5 -1.5v3M32.5 -2.5v5M34.5 -1.5v3M38.5 -4.5v9M40.5 -2.5v5M42.5 -1.5v3M44.5 -1.5v3M46.5 -1.5v3M50.5 -1.5v3M54.5 -1.5v3M58.5 -1.5v3M60.5 -4.5v9M64.5 -2.5v5M66.5 -2.5v5M68.5 -1.5v3" stroke="#f8f6fb" stroke-width="1" fill="none" opacity=".96"/></g>
<g id="wD2"><path d="M0 0H71" stroke="#e6e2ee" stroke-width="1" fill="none" opacity=".62"/><path d="M36.5 -1.5v3" stroke="#f6f4f9" stroke-width="1" fill="none" opacity=".6"/><path d="M1.5 -3.5v7M3.5 -2.5v5M5.5 -2.5v5M8.5 -1.5v3M10.5 -1.5v3M12.5 -1.5v3M14.5 -1.5v3M16.5 -1.5v3M18.5 -1.5v3M24.5 -1.5v3M26.5 -1.5v3M28.5 -1.5v3M30.5 -1.5v3M32.5 -1.5v3M38.5 -4.5v9M40.5 -1.5v3M42.5 -1.5v3M44.5 -1.5v3M46.5 -1.5v3M50.5 -1.5v3M54.5 -1.5v3M58.5 -1.5v3M60.5 -4.5v9M64.5 -2.5v5M66.5 -1.5v3M68.5 -1.5v3" stroke="#f8f6fb" stroke-width="1" fill="none" opacity=".96"/></g>
<g id="wE"><path d="M0 0H71" stroke="#e6e2ee" stroke-width="1" fill="none" opacity=".62"/><path d="M4.5 -1.5v3M9.5 -1.5v3M22.5 -1.5v3M62.5 -1.5v3M64.5 -1.5v3M68.5 -1.5v3" stroke="#f6f4f9" stroke-width="1" fill="none" opacity=".6"/><path d="M2.5 -2.5v5M14.5 -2.5v5M16.5 -1.5v3M20.5 -1.5v3M24.5 -1.5v3M26.5 -1.5v3M28.5 -1.5v3M32.5 -2.5v5M34.5 -2.5v5M36.5 -2.5v5M38.5 -3.5v7M40.5 -1.5v3M44.5 -2.5v5M48.5 -2.5v5M50.5 -2.5v5M52.5 -2.5v5M54.5 -1.5v3M56.5 -3.5v7M58.5 -1.5v3M60.5 -1.5v3M66.5 -1.5v3" stroke="#f8f6fb" stroke-width="1" fill="none" opacity=".96"/></g>
<g id="nA" fill="#aaa3ec"><rect x="0.2" y="21.2" width="3.8" height="2.7"/><rect x="9.2" y="21.2" width="3.9" height="2.7"/><rect x="18.0" y="19.2" width="4.0" height="2.7"/><rect x="27.0" y="19.2" width="4.0" height="2.7"/><rect x="31.0" y="16.9" width="4.0" height="2.0"/><rect x="35.0" y="21.2" width="5.0" height="2.7"/><rect x="44.0" y="21.2" width="5.0" height="2.7"/><rect x="53.0" y="19.2" width="5.0" height="2.7"/><rect x="62.0" y="19.2" width="4.0" height="2.7"/><rect x="66.0" y="20.2" width="5.0" height="2.8"/></g>
<g id="nB" fill="#aaa3ec"><rect x="0.3" y="22.0" width="1.9" height="2.6"/><rect x="3.8" y="21.0" width="1.9" height="2.6"/><rect x="7.4" y="19.5" width="1.9" height="2.6"/><rect x="10.9" y="21.5" width="1.9" height="2.6"/><rect x="14.5" y="19.0" width="1.9" height="2.6"/><rect x="18.1" y="21.0" width="1.9" height="2.6"/><rect x="21.6" y="22.0" width="1.9" height="2.6"/><rect x="25.1" y="19.5" width="1.9" height="2.6"/><rect x="28.7" y="21.0" width="1.9" height="2.6"/><rect x="32.2" y="20.5" width="1.9" height="2.6"/><rect x="35.8" y="22.0" width="1.9" height="2.6"/><rect x="39.3" y="19.0" width="1.9" height="2.6"/><rect x="42.9" y="21.0" width="1.9" height="2.6"/><rect x="46.4" y="22.0" width="1.9" height="2.6"/><rect x="50.0" y="19.0" width="1.9" height="2.6"/><rect x="53.5" y="20.5" width="1.9" height="2.6"/><rect x="57.1" y="22.0" width="1.9" height="2.6"/><rect x="60.6" y="20.0" width="1.9" height="2.6"/><rect x="64.2" y="19.5" width="1.9" height="2.6"/><rect x="67.8" y="20.5" width="1.9" height="2.6"/></g>
<g id="dP" fill="#f1b9b2"><rect x="9.0" y="26.7" width="9.0" height="2.0"/><rect x="27.0" y="26.7" width="9.0" height="2.0"/><rect x="45.0" y="26.7" width="9.0" height="2.0"/><rect x="62.4" y="26.7" width="8.6" height="2.0"/></g>
<g id="dP5" fill="#f1b9b2"><rect x="9.0" y="8.6" width="9.0" height="1.8"/><rect x="27.0" y="8.6" width="9.0" height="1.8"/><rect x="45.0" y="8.6" width="9.0" height="1.8"/><rect x="62.4" y="8.6" width="8.6" height="1.8"/></g>
<g id="dT" fill="#f3c4bd"><rect x="1.0" y="26.5" width="2.0" height="1.5"/><rect x="3.0" y="26.5" width="1.0" height="1.5"/><rect x="5.0" y="26.5" width="1.0" height="1.5"/><rect x="7.0" y="26.5" width="1.0" height="1.5"/><rect x="9.0" y="26.5" width="1.0" height="1.5"/><rect x="11.0" y="26.5" width="1.0" height="1.5"/><rect x="13.0" y="26.5" width="1.0" height="1.5"/><rect x="15.0" y="26.5" width="2.0" height="1.5"/><rect x="17.0" y="26.5" width="1.0" height="1.5"/><rect x="23.0" y="26.5" width="1.0" height="1.5"/><rect x="25.0" y="26.5" width="1.0" height="1.5"/><rect x="27.0" y="26.5" width="1.0" height="1.5"/><rect x="29.0" y="26.5" width="1.0" height="1.5"/><rect x="31.0" y="26.5" width="1.0" height="1.5"/><rect x="35.0" y="26.5" width="1.0" height="1.5"/><rect x="37.0" y="26.5" width="1.0" height="1.5"/><rect x="39.0" y="26.5" width="1.0" height="1.5"/><rect x="41.0" y="26.5" width="1.0" height="1.5"/><rect x="43.0" y="26.5" width="1.0" height="1.5"/><rect x="45.0" y="26.5" width="1.0" height="1.5"/><rect x="49.0" y="26.5" width="1.0" height="1.5"/><rect x="51.0" y="26.5" width="1.0" height="1.5"/><rect x="53.0" y="26.5" width="1.0" height="1.5"/><rect x="55.0" y="26.5" width="1.0" height="1.5"/><rect x="57.0" y="26.5" width="1.0" height="1.5"/><rect x="59.0" y="26.5" width="1.0" height="1.5"/><rect x="61.0" y="26.5" width="1.0" height="1.5"/><rect x="63.0" y="26.5" width="1.0" height="1.5"/><rect x="65.0" y="26.5" width="1.0" height="1.5"/><rect x="67.0" y="26.5" width="1.0" height="1.5"/><rect x="69.0" y="26.5" width="1.0" height="1.5"/></g>
</defs></svg>
<svg class="b" style="left:0;top:0" width="930" height="650" viewBox="0 0 930 650"><rect x="116.0" y="414" width="71.2" height="45" fill="#2c2967"/><use href="#wA" x="116" y="425.5"/><use href="#wA" x="116" y="447.5"/><use href="#nA" x="116" y="414"/><rect x="187.95" y="414" width="70.8" height="45" fill="#3f2866"/><use href="#wB" x="188" y="425.5"/><use href="#wB" x="188" y="447.5"/><rect x="259.75" y="414" width="70.8" height="45" fill="#552a69"/><use href="#wB" x="260" y="425.5"/><use href="#wB" x="260" y="447.5"/><rect x="331.55" y="414" width="70.8" height="45" fill="#6a294a"/><use href="#wC" x="332" y="425.5"/><use href="#wC" x="332" y="447.5"/><rect x="403.35" y="414" width="70.8" height="45" fill="#6a322c"/><use href="#dP" x="403" y="414"/><rect x="116.0" y="460" width="71.2" height="45" fill="#2c2967"/><use href="#wA" x="116" y="471.5"/><use href="#wA" x="116" y="493.5"/><use href="#nB" x="116" y="460"/><rect x="187.95" y="460" width="70.8" height="45" fill="#3f2866"/><use href="#wB" x="188" y="471.5"/><use href="#wB" x="188" y="493.5"/><rect x="259.75" y="460" width="70.8" height="45" fill="#552a69"/><use href="#wB" x="260" y="471.5"/><use href="#wB" x="260" y="493.5"/><rect x="403.35" y="460" width="70.8" height="45" fill="#6a322c"/><use href="#dP" x="403" y="460"/><rect x="116.0" y="506" width="71.2" height="45" fill="#2c2967"/><use href="#wA" x="116" y="517.5"/><use href="#wA" x="116" y="539.5"/><use href="#nA" x="116" y="506"/><rect x="187.95" y="506" width="70.8" height="45" fill="#3f2866"/><use href="#wB" x="188" y="517.5"/><use href="#wB" x="188" y="539.5"/><rect x="259.75" y="506" width="70.8" height="45" fill="#552a69"/><use href="#wB" x="260" y="517.5"/><use href="#wB" x="260" y="539.5"/><rect x="331.55" y="506" width="70.8" height="45" fill="#6a294a"/><use href="#wC" x="332" y="517.5"/><use href="#wC" x="332" y="539.5"/><rect x="403.35" y="506" width="70.8" height="45" fill="#6a322c"/><use href="#dP" x="403" y="506"/><rect x="475.15" y="506" width="70.8" height="45" fill="#68402a"/><use href="#wD" x="475" y="517.5"/><use href="#wD2" x="475" y="539.5"/><rect x="187.95" y="552" width="70.8" height="45" fill="#3f2866"/><rect x="230.14999999999998" y="552" width="28.599999999999994" height="45" fill="#7e56d8"/><rect x="188.45" y="552.5" width="69.8" height="44" fill="none" stroke="#f2f2f4" stroke-width="1"/><use href="#wB" x="188" y="563.5"/><use href="#wB" x="188" y="585.5"/><rect x="259.75" y="552" width="70.8" height="45" fill="#552a69"/><rect x="301.95" y="552" width="28.599999999999994" height="45" fill="#a956da"/><rect x="260.25" y="552.5" width="69.8" height="44" fill="none" stroke="#f2f2f4" stroke-width="1"/><use href="#wB" x="260" y="563.5"/><use href="#wB" x="260" y="585.5"/><rect x="331.55" y="552" width="70.8" height="45" fill="#6a294a"/><rect x="373.75" y="552" width="28.599999999999994" height="45" fill="#d65597"/><rect x="332.05" y="552.5" width="69.8" height="44" fill="none" stroke="#f2f2f4" stroke-width="1"/><use href="#wC" x="332" y="563.5"/><use href="#wC" x="332" y="585.5"/><rect x="403.35" y="552" width="70.8" height="45" fill="#6a322c"/><rect x="431.75" y="552" width="42.4" height="45" fill="#d46a56"/><rect x="403.85" y="552.5" width="69.8" height="44" fill="none" stroke="#f2f2f4" stroke-width="1"/><use href="#wE" x="403" y="563.5"/><use href="#wE" x="403" y="585.5"/><use href="#dT" x="403" y="552"/><rect x="475.15" y="552" width="70.8" height="45" fill="#68402a"/><rect x="517.35" y="552" width="28.599999999999994" height="45" fill="#d48259"/><rect x="475.65" y="552.5" width="69.8" height="44" fill="none" stroke="#f2f2f4" stroke-width="1"/><use href="#wD" x="475" y="563.5"/><use href="#wD2" x="475" y="585.5"/><rect x="116.0" y="598" width="71.2" height="45" fill="#2c2967"/><use href="#nA" x="116" y="598"/><rect x="187.95" y="598" width="70.8" height="45" fill="#3f2866"/><use href="#wB" x="188" y="609.5"/><use href="#wB" x="188" y="631.5"/><rect x="259.75" y="598" width="70.8" height="45" fill="#552a69"/><use href="#wB" x="260" y="609.5"/><use href="#wB" x="260" y="631.5"/><rect x="331.55" y="598" width="70.8" height="45" fill="#6a294a"/><use href="#wC" x="332" y="609.5"/><use href="#wC" x="332" y="631.5"/><rect x="403.35" y="598" width="70.8" height="45" fill="#6a322c"/><use href="#wE" x="403" y="609.5"/><use href="#wE" x="403" y="631.5"/><use href="#dP" x="403" y="598"/><rect x="475.15" y="598" width="70.8" height="45" fill="#68402a"/><use href="#wD" x="475" y="609.5"/><use href="#wD2" x="475" y="631.5"/></svg>
<div class="b" style="left:116px;top:644px;width:813.5px;height:86px;background:#000;"></div>
<div class="b" style="left:186.95px;top:644px;width:1.05px;height:86px;background:#1c1c1d;"></div>
<div class="b" style="left:258.75px;top:644px;width:1.05px;height:86px;background:#1c1c1d;"></div>
<div class="b" style="left:330.55px;top:644px;width:1.05px;height:86px;background:#1c1c1d;"></div>
<div class="b" style="left:402.35px;top:644px;width:1.05px;height:86px;background:#1c1c1d;"></div>
<div class="b" style="left:474.15px;top:644px;width:1.05px;height:86px;background:#1c1c1d;"></div>
<div class="b" style="left:545.95px;top:644px;width:1.05px;height:86px;background:#1c1c1d;"></div>
<div class="b" style="left:617.75px;top:644px;width:1.05px;height:86px;background:#1c1c1d;"></div>
<div class="b" style="left:689.55px;top:644px;width:1.05px;height:86px;background:#1c1c1d;"></div>
<div class="b" style="left:761.35px;top:644px;width:1.05px;height:86px;background:#1c1c1d;"></div>
<div class="b" style="left:833.15px;top:644px;width:1.05px;height:86px;background:#1c1c1d;"></div>
<div class="b" style="left:904.95px;top:644px;width:1.05px;height:86px;background:#1c1c1d;"></div>
<div class="b" style="left:116px;top:729.5px;width:813.5px;height:70.5px;background:#0d0d0e;"></div>
<svg class="b" style="left:0;top:0" width="930" height="800" viewBox="0 0 930 800"><rect x="116.0" y="729.8" width="71.3" height="30.1" fill="#cececf"/><rect x="147.5" y="740.5" width="8.8" height="8.8" fill="none" stroke="#505053" stroke-width="1"/><rect x="116.0" y="761.8" width="70.1" height="36.1" fill="#5857d6"/><rect x="187.8" y="729.8" width="70.9" height="30.1" fill="#cececf"/><rect x="219.5" y="740.5" width="8.8" height="8.8" fill="none" stroke="#505053" stroke-width="1"/><rect x="187.8" y="761.8" width="70.1" height="36.1" fill="#3a3a3f"/><rect x="259.6" y="729.8" width="70.9" height="30.1" fill="#cececf"/><rect x="290.5" y="740.5" width="8.8" height="8.8" fill="none" stroke="#505053" stroke-width="1"/><rect x="259.6" y="761.8" width="70.1" height="36.1" fill="#3a3a3f"/><rect x="331.4" y="729.8" width="70.9" height="30.1" fill="#cececf"/><rect x="362.5" y="740.5" width="8.8" height="8.8" fill="none" stroke="#505053" stroke-width="1"/><rect x="331.4" y="761.8" width="70.1" height="36.1" fill="#3a3a3f"/><rect x="403.2" y="729.8" width="70.9" height="30.1" fill="#cececf"/><rect x="434.5" y="740.5" width="8.8" height="8.8" fill="none" stroke="#505053" stroke-width="1"/><rect x="403.2" y="761.8" width="70.1" height="36.1" fill="#3a3a3f"/><rect x="475.0" y="729.8" width="70.9" height="30.1" fill="#cececf"/><rect x="506.5" y="740.5" width="8.8" height="8.8" fill="none" stroke="#505053" stroke-width="1"/><rect x="475.0" y="761.8" width="70.1" height="36.1" fill="#3a3a3f"/><rect x="546.8" y="729.8" width="70.9" height="30.1" fill="#cececf"/><rect x="577.5" y="740.5" width="8.8" height="8.8" fill="none" stroke="#505053" stroke-width="1"/><rect x="546.8" y="761.8" width="70.1" height="36.1" fill="#3a3a3f"/><rect x="618.6" y="729.8" width="70.9" height="30.1" fill="#cececf"/><rect x="649.5" y="740.5" width="8.8" height="8.8" fill="none" stroke="#505053" stroke-width="1"/><rect x="618.6" y="761.8" width="70.1" height="36.1" fill="#3a3a3f"/><rect x="690.4" y="729.8" width="70.9" height="30.1" fill="#cececf"/><rect x="721.5" y="740.5" width="8.8" height="8.8" fill="none" stroke="#505053" stroke-width="1"/><rect x="690.4" y="761.8" width="70.1" height="36.1" fill="#3a3a3f"/><rect x="762.2" y="729.8" width="70.9" height="30.1" fill="#cececf"/><rect x="793.5" y="740.5" width="8.8" height="8.8" fill="none" stroke="#505053" stroke-width="1"/><rect x="762.2" y="761.8" width="70.1" height="36.1" fill="#3a3a3f"/><rect x="834.0" y="729.8" width="70.9" height="30.1" fill="#cececf"/><rect x="865.5" y="740.5" width="8.8" height="8.8" fill="none" stroke="#505053" stroke-width="1"/><rect x="834.0" y="761.8" width="70.1" height="36.1" fill="#3a3a3f"/><rect x="905.8" y="729.8" width="70.9" height="30.1" fill="#cececf"/><rect x="905.8" y="761.8" width="30" height="36.1" fill="#3a3a3f"/></svg>
<span class="t" style="left:147.27px;top:772.215px;font-size:18.17px;line-height:18.17px;color:#fbfbfd;transform:translate(0,0.10px) scaleX(0.8000) rotate(0.05deg);">1</span>
<span class="t" style="left:219.27px;top:772.215px;font-size:18.17px;line-height:18.17px;color:#a9a9b2;transform:translate(0,0.10px) scaleX(0.8000) rotate(0.05deg);">2</span>
<span class="t" style="left:290.27px;top:772.215px;font-size:18.17px;line-height:18.17px;color:#a9a9b2;transform:translate(0,0.10px) scaleX(0.8000) rotate(0.05deg);">3</span>
<span class="t" style="left:362.27px;top:772.215px;font-size:18.17px;line-height:18.17px;color:#a9a9b2;transform:translate(0,0.10px) scaleX(0.8000) rotate(0.05deg);">4</span>
<span class="t" style="left:434.27px;top:772.215px;font-size:18.17px;line-height:18.17px;color:#a9a9b2;transform:translate(0,0.10px) scaleX(0.8000) rotate(0.05deg);">5</span>
<span class="t" style="left:506.27px;top:772.215px;font-size:18.17px;line-height:18.17px;color:#a9a9b2;transform:translate(0,0.10px) scaleX(0.8000) rotate(0.05deg);">6</span>
<span class="t" style="left:577.27px;top:772.215px;font-size:18.17px;line-height:18.17px;color:#a9a9b2;transform:translate(0,0.10px) scaleX(0.8000) rotate(0.05deg);">7</span>
<span class="t" style="left:649.27px;top:772.215px;font-size:18.17px;line-height:18.17px;color:#a9a9b2;transform:translate(0,0.10px) scaleX(0.8000) rotate(0.05deg);">8</span>
<span class="t" style="left:721.27px;top:772.215px;font-size:18.17px;line-height:18.17px;color:#a9a9b2;transform:translate(0,0.10px) scaleX(0.8000) rotate(0.05deg);">9</span>
<span class="t" style="left:789.23px;top:772.215px;font-size:18.17px;line-height:18.17px;color:#a9a9b2;transform:translate(0,0.10px) scaleX(0.8000) rotate(0.05deg);">10</span>
<span class="t" style="left:861.74px;top:772.215px;font-size:18.17px;line-height:18.17px;color:#a9a9b2;transform:translate(0,0.10px) scaleX(0.8000) rotate(0.05deg);">11</span>
<div class="b" style="left:116px;top:798px;width:813.5px;height:154px;background:#0e0e0f;"></div>
<div class="b" style="left:116.0px;top:800px;width:142.2px;height:75px;background:;background:linear-gradient(180deg,#202024 0%,#19191c 45%,#101012 100%);border-radius:6px 6px 2px 2px;"></div>
<span class="t m" style="left:124.10px;top:805.260px;font-size:13.08px;line-height:13.08px;color:#b6b6bd;transform:translate(0,1.00px) scaleX(0.7506) rotate(0.05deg);">1 - OSCILLATOR</span>
<div class="b" style="left:124.5px;top:836px;width:126px;height:1px;background:#30307c;opacity:.82"></div>
<div class="b" style="left:124.5px;top:829px;width:126px;height:15px;background:;background:linear-gradient(180deg,transparent,#30307c12 48%,#30307c12 52%,transparent)"></div>
<div class="b" style="left:116.0px;top:876px;width:142.2px;height:75px;background:;background:linear-gradient(180deg,#202024 0%,#19191c 45%,#101012 100%);border-radius:6px 6px 2px 2px;"></div>
<span class="t m" style="left:124.10px;top:882.260px;font-size:13.08px;line-height:13.08px;color:#b6b6bd;transform:translate(0,0.20px) scaleX(0.7848) rotate(0.05deg);">2 - NONE</span>
<div class="b" style="left:124.5px;top:912px;width:126px;height:1px;background:#48308e;opacity:.82"></div>
<div class="b" style="left:124.5px;top:905px;width:126px;height:15px;background:;background:linear-gradient(180deg,transparent,#48308e12 48%,#48308e12 52%,transparent)"></div>
<div class="b" style="left:259.6px;top:800px;width:142.2px;height:75px;background:;background:linear-gradient(180deg,#202024 0%,#19191c 45%,#101012 100%);border-radius:6px 6px 2px 2px;"></div>
<span class="t m" style="left:267.70px;top:805.260px;font-size:13.08px;line-height:13.08px;color:#b6b6bd;transform:translate(0,1.00px) scaleX(0.7760) rotate(0.05deg);">3 - NONE</span>
<div class="b" style="left:268.1px;top:836px;width:126px;height:1px;background:#7c3a92;opacity:.82"></div>
<div class="b" style="left:268.1px;top:829px;width:126px;height:15px;background:;background:linear-gradient(180deg,transparent,#7c3a9212 48%,#7c3a9212 52%,transparent)"></div>
<div class="b" style="left:259.6px;top:876px;width:142.2px;height:75px;background:;background:linear-gradient(180deg,#202024 0%,#19191c 45%,#101012 100%);border-radius:6px 6px 2px 2px;"></div>
<span class="t m" style="left:267.70px;top:882.260px;font-size:13.08px;line-height:13.08px;color:#b6b6bd;transform:translate(0,0.20px) scaleX(0.7866) rotate(0.05deg);">4 - NONE</span>
<div class="b" style="left:268.1px;top:912px;width:126px;height:1px;background:#a13a5c;opacity:.82"></div>
<div class="b" style="left:268.1px;top:905px;width:126px;height:15px;background:;background:linear-gradient(180deg,transparent,#a13a5c12 48%,#a13a5c12 52%,transparent)"></div>
<div class="b" style="left:403.2px;top:800px;width:142.2px;height:75px;background:;background:linear-gradient(180deg,#202024 0%,#19191c 45%,#101012 100%);border-radius:6px 6px 2px 2px;"></div>
<span class="t m" style="left:411.30px;top:805.260px;font-size:13.08px;line-height:13.08px;color:#b6b6bd;transform:translate(0,1.00px) scaleX(0.8153) rotate(0.05deg);">5 - 08 HI-HAT</span>
<svg class="b" style="left:0px;top:0px;" width="930" height="860" viewBox="0 0 930 860"><path d="M412.0 838.1L413.0 838.2L414.0 838.7L415.0 837.9L416.0 837.8L417.0 837.9L418.0 837.1L419.0 837.6L420.0 837.7L421.0 837.9L422.0 836.7L423.0 836.9L424.0 836.5L425.0 837.6L426.0 837.3L427.0 836.2L428.0 837.6L429.0 837.6L430.0 837.0L431.0 836.9L432.0 836.1L433.0 835.8L434.0 836.6L435.0 835.8L436.0 836.0L437.0 836.1L438.0 835.7L439.0 836.4L440.0 836.3L441.0 836.9L442.0 836.4L443.0 836.6L444.0 836.4L445.0 836.7L446.0 836.4L447.0 836.1L448.0 837.3L449.0 837.3L450.0 837.1L451.0 836.9L452.0 836.3L453.0 836.2L454.0 836.3L455.0 836.0L456.0 837.2L457.0 836.7L458.0 837.4L459.0 836.7L460.0 837.7L461.0 837.6L462.0 836.3L463.0 836.7L464.0 837.9L465.0 837.3L466.0 838.1L467.0 837.3L468.0 836.8L469.0 837.7L470.0 837.9L471.0 837.1L472.0 836.8L473.0 837.2L474.0 838.2L475.0 837.8L476.0 836.8L477.0 837.0L478.0 836.7L479.0 836.7L480.0 837.9L481.0 837.0L482.0 837.7L483.0 837.6L484.0 837.3L485.0 838.2L486.0 837.3L487.0 838.2L488.0 837.5L489.0 838.0L490.0 837.7L491.0 837.7L492.0 838.9L493.0 838.6L494.0 837.7L495.0 838.5L496.0 837.2L497.0 837.3L498.0 837.9L499.0 837.3L500.0 836.3L501.0 837.5L502.0 836.1L503.0 836.0L504.0 836.6L505.0 835.7L506.0 835.5L507.0 834.9L508.0 834.8L509.0 835.4L510.0 834.8L511.0 835.2L512.0 834.8L513.0 834.8L514.0 835.5L515.0 834.7L516.0 834.7L517.0 835.1L518.0 833.9L519.0 833.7L520.0 834.9L521.0 834.6L522.0 833.6L523.0 833.4L524.0 834.2L525.0 834.4L526.0 833.1L527.0 834.2L528.0 834.4L529.0 833.9L530.0 833.5L531.0 832.9L532.0 832.7L533.0 834.1L534.0 832.8L535.0 833.5L536.0 832.7" stroke="#b04f3b" stroke-width="0.9" fill="none"/></svg>
<div class="b" style="left:403.2px;top:876px;width:142.2px;height:75px;background:;background:linear-gradient(180deg,#202024 0%,#19191c 45%,#101012 100%);border-radius:6px 6px 2px 2px;"></div>
<span class="t m" style="left:411.30px;top:882.260px;font-size:13.08px;line-height:13.08px;color:#b6b6bd;transform:translate(0,0.20px) scaleX(0.7830) rotate(0.05deg);">6 - NONE</span>
<div class="b" style="left:411.7px;top:912px;width:126px;height:1px;background:#ad5c30;opacity:.82"></div>
<div class="b" style="left:411.7px;top:905px;width:126px;height:15px;background:;background:linear-gradient(180deg,transparent,#ad5c3012 48%,#ad5c3012 52%,transparent)"></div>
<div class="b" style="left:546.8px;top:800px;width:142.2px;height:75px;background:;background:linear-gradient(180deg,#202024 0%,#19191c 45%,#101012 100%);border-radius:6px 6px 2px 2px;"></div>
<span class="t m" style="left:554.90px;top:805.260px;font-size:13.08px;line-height:13.08px;color:#b6b6bd;transform:translate(0,1.00px) scaleX(0.7760) rotate(0.05deg);">7 - NONE</span>
<div class="b" style="left:555.3px;top:836px;width:126px;height:1px;background:#8a7024;opacity:.82"></div>
<div class="b" style="left:555.3px;top:829px;width:126px;height:15px;background:;background:linear-gradient(180deg,transparent,#8a702412 48%,#8a702412 52%,transparent)"></div>
<div class="b" style="left:546.8px;top:876px;width:142.2px;height:75px;background:;background:linear-gradient(180deg,#202024 0%,#19191c 45%,#101012 100%);border-radius:6px 6px 2px 2px;"></div>
<span class="t m" style="left:554.90px;top:882.260px;font-size:13.08px;line-height:13.08px;color:#b6b6bd;transform:translate(0,0.20px) scaleX(0.7830) rotate(0.05deg);">8 - NONE</span>
<div class="b" style="left:555.3px;top:912px;width:126px;height:1px;background:#9a8e28;opacity:.82"></div>
<div class="b" style="left:555.3px;top:905px;width:126px;height:15px;background:;background:linear-gradient(180deg,transparent,#9a8e2812 48%,#9a8e2812 52%,transparent)"></div>
<div class="b" style="left:690.4px;top:800px;width:142.2px;height:75px;background:;background:linear-gradient(180deg,#202024 0%,#19191c 45%,#101012 100%);border-radius:6px 6px 2px 2px;"></div>
<span class="t m" style="left:698.50px;top:805.260px;font-size:13.08px;line-height:13.08px;color:#b6b6bd;transform:translate(0,1.00px) scaleX(0.7795) rotate(0.05deg);">9 - NONE</span>
<div class="b" style="left:698.9px;top:836px;width:126px;height:1px;background:#8a9a2a;opacity:.82"></div>
<div class="b" style="left:698.9px;top:829px;width:126px;height:15px;background:;background:linear-gradient(180deg,transparent,#8a9a2a12 48%,#8a9a2a12 52%,transparent)"></div>
<div class="b" style="left:690.4px;top:876px;width:142.2px;height:75px;background:;background:linear-gradient(180deg,#202024 0%,#19191c 45%,#101012 100%);border-radius:6px 6px 2px 2px;"></div>
<span class="t m" style="left:698.50px;top:882.260px;font-size:13.08px;line-height:13.08px;color:#b6b6bd;transform:translate(0,0.20px) scaleX(0.7661) rotate(0.05deg);">10 - NONE</span>
<div class="b" style="left:698.9px;top:912px;width:126px;height:1px;background:#5e9a28;opacity:.82"></div>
<div class="b" style="left:698.9px;top:905px;width:126px;height:15px;background:;background:linear-gradient(180deg,transparent,#5e9a2812 48%,#5e9a2812 52%,transparent)"></div>
<div class="b" style="left:834.0px;top:800px;width:100px;height:75px;background:;background:linear-gradient(180deg,#202024 0%,#19191c 45%,#101012 100%);border-radius:6px 6px 2px 2px;"></div>
<span class="t m" style="left:842.10px;top:805.260px;font-size:13.08px;line-height:13.08px;color:#b6b6bd;transform:translate(0,1.00px) scaleX(0.7304) rotate(0.05deg);">11 - NONE</span>
<div class="b" style="left:842.5px;top:836px;width:126px;height:1px;background:#3a9c3c;opacity:.82"></div>
<div class="b" style="left:842.5px;top:829px;width:126px;height:15px;background:;background:linear-gradient(180deg,transparent,#3a9c3c12 48%,#3a9c3c12 52%,transparent)"></div>
<div class="b" style="left:834.0px;top:876px;width:100px;height:75px;background:;background:linear-gradient(180deg,#202024 0%,#19191c 45%,#101012 100%);border-radius:6px 6px 2px 2px;"></div>
<span class="t m" style="left:842.10px;top:882.260px;font-size:13.08px;line-height:13.08px;color:#b6b6bd;transform:translate(0,0.20px) scaleX(0.7614) rotate(0.05deg);">12 - NONE</span>
<div class="b" style="left:842.5px;top:912px;width:126px;height:1px;background:#2a9c5c;opacity:.82"></div>
<div class="b" style="left:842.5px;top:905px;width:126px;height:15px;background:;background:linear-gradient(180deg,transparent,#2a9c5c12 48%,#2a9c5c12 52%,transparent)"></div>
<div class="b" style="left:116px;top:951px;width:813.5px;height:1px;background:#060607;"></div>
<div class="b" style="left:116px;top:952px;width:813.5px;height:46px;background:#212025;"></div>
<div class="b" style="left:123.5px;top:961px;width:59.5px;height:29px;background:#2b2b30;border-radius:5px"></div>
<svg class="b" style="left:138px;top:962px;" width="30" height="26" viewBox="0 0 30 26"><path d="M15 3.2L27 16H20.4V23.6H9.6V16H3Z" fill="#b9b9bb"/></svg>
<div class="b" style="left:198.4px;top:960.2px;width:90px;height:30.2px;background:#000;border-radius:5px;border:1px solid #26262a;box-sizing:border-box"></div>
<div class="b" style="left:200.6px;top:962.6px;width:5.4px;height:25.4px;background:#3b3b3d;border-radius:2px"></div>
<span class="t" style="left:234.50px;top:968.985px;font-size:11.63px;line-height:11.63px;color:#dedee2;transform:translate(0,0.50px) scaleX(0.8040) rotate(0.05deg);">11%</span>
<svg class="b" style="left:320px;top:962px;" width="28" height="28" viewBox="0 0 28 28"><rect x="2.8" y="3.2" width="21.4" height="20.8" rx="3" fill="none" stroke="#f1f1f3" stroke-width="1.6"/><path d="M2.8 11V6.2a3 3 0 0 1 3-3H21.2a3 3 0 0 1 3 3V11Z" fill="#f1f1f3"/></svg>
<svg class="b" style="left:365px;top:962px;" width="28" height="28" viewBox="0 0 28 28"><rect x="3.2" y="3.2" width="21" height="20.8" rx="3" fill="none" stroke="#f1f1f3" stroke-width="1.6"/><path d="M3.2 17V21a3 3 0 0 0 3 3H21.2a3 3 0 0 0 3-3V17Z" fill="#f1f1f3"/></svg>
<svg class="b" style="left:436.6px;top:958.6px;" width="34" height="34" viewBox="0 0 34 34"><g fill="none" stroke="#cbcbcd" stroke-width="1.6" stroke-linecap="round" stroke-linejoin="round"><path d="M16 7.6A11.2 11.2 0 1 1 4.8 18.8"/><path d="M16.4 7.6H6M11.2 2.6L6 7.6L11.2 12.8"/></g></svg>
<svg class="b" style="left:480.6px;top:958.6px;" width="34" height="34" viewBox="0 0 34 34"><g transform="translate(34 0) scale(-1 1)"><g fill="none" stroke="#6b6b6d" stroke-width="1.6" stroke-linecap="round" stroke-linejoin="round"><path d="M16 7.6A11.2 11.2 0 1 1 4.8 18.8"/><path d="M16.4 7.6H6M11.2 2.6L6 7.6L11.2 12.8"/></g></g></svg>
<svg width="0" height="0" style="position:absolute"><defs><linearGradient id="pg" x1="0" y1="0" x2="1" y2="0"><stop offset="0" stop-color="#bdbdc0"/><stop offset=".5" stop-color="#f4f4f6"/><stop offset="1" stop-color="#dcdcdf"/></linearGradient></defs></svg>
<svg class="b" style="left:642px;top:960px;" width="30" height="30" viewBox="0 0 30 30"><path d="M4 4.6L24.8 15.2L4 25.8Z" fill="url(#pg)" stroke="url(#pg)" stroke-width="0.8" stroke-linejoin="round"/></svg>
<div class="b" style="left:702px;top:960px;width:1px;height:30px;background:#37373b;"></div>
<div class="b" style="left:737px;top:964.5px;width:22px;height:21.5px;background:#6c6c72;border-radius:2px"></div>
<div class="b" style="left:793px;top:960px;width:1px;height:30px;background:#37373b;"></div>
<div class="b" style="left:828px;top:964px;width:22px;height:22px;background:#8e1115;border-radius:50%"></div>
<div class="b" style="left:884.5px;top:960.5px;width:60px;height:30px;background:transparent;border:1.6px solid #4e4e52;border-radius:5px;box-sizing:border-box"></div>
<span class="t" style="left:901.00px;top:969.125px;font-size:12.35px;line-height:12.35px;color:#f6f6f8;transform:translate(0,1.00px) scaleX(0.6229) rotate(0.05deg);font-weight:bold;">LATCH</span>
</div>
<div class="b" style="left:1075px;top:141.2px;width:115.5px;height:32.8px;background:#303036;border-radius:7px"></div>
<span class="t m" style="left:984.00px;top:150.240px;font-size:15.12px;line-height:15.12px;color:#9b9ba5;transform:translate(0,0.50px) scaleX(0.8446) rotate(0.05deg);">POOL</span>
<span class="t m" style="left:1099.00px;top:150.240px;font-size:15.12px;line-height:15.12px;color:#f4f4f6;transform:translate(0,0.50px) scaleX(0.8579) rotate(0.05deg);">BROWSER</span>
<span class="t m" style="left:1227.00px;top:150.240px;font-size:15.12px;line-height:15.12px;color:#9b9ba5;transform:translate(0,0.50px) scaleX(0.8375) rotate(0.05deg);">RECORDER</span>
<div class="b" style="left:929px;top:194.5px;width:407px;height:1px;background:#232227;"></div>
<div class="b" style="left:929px;top:195.5px;width:407px;height:45px;background:#27262c;"></div>
<svg class="b" style="left:940px;top:205px;" width="28" height="28" viewBox="0 0 28 28"><g fill="none" stroke="#f1f1f3" stroke-width="1.6"><circle cx="10.6" cy="11.4" r="7"/><path d="M15.6 16.6L22.6 23"/></g></svg>
<svg class="b" style="left:940px;top:254px;" width="26" height="22" viewBox="0 0 26 22"><path d="M3.2 15.4L12.6 6.2L22.2 15.4" stroke="#f1f1f3" stroke-width="1.5" fill="none"/></svg>
<span class="t m" style="left:976.00px;top:257.240px;font-size:15.12px;line-height:15.12px;color:#f4f4f6;transform:translate(0,0.50px) scaleX(0.8710) rotate(0.05deg);">HOUSE FLAVOURS</span>
<svg class="b" style="left:1300px;top:252px;" width="26" height="24" viewBox="0 0 26 24"><path d="M12.8 5.2L20.6 11.2V17.6a2.4 2.4 0 0 1-2.4 2.4H7.4A2.4 2.4 0 0 1 5 17.6V11.2Z" fill="none" stroke="#f4f4f6" stroke-width="1.8" stroke-linejoin="round"/></svg>
<div class="b" style="left:929px;top:287px;width:407px;height:45px;background:#323238;"></div>
<svg class="b" style="left:939px;top:299px;transform:scale(0.985,0.955);transform-origin:0 0;" width="32" height="26" viewBox="0 0 32 26"><path d="M3.6 21.4V4.8a1.6 1.6 0 0 1 1.6-1.6h7.2a2 2 0 0 1 1.6.8l1.2 1.6h11.4a1.6 1.6 0 0 1 1.6 1.6V21.4a1.6 1.6 0 0 1-1.6 1.6H5.2a1.6 1.6 0 0 1-1.6-1.6Z" fill="none" stroke="#d7d7da" stroke-width="1.3" stroke-linejoin="round"/></svg>
<span class="t m" style="left:977.20px;top:304.240px;font-size:15.12px;line-height:15.12px;color:#f2f2f4;transform:translate(0,0.50px) scaleX(0.8417) rotate(0.05deg);word-spacing:1.6px;">HF AUDIO KICKS</span>
<svg class="b" style="left:939px;top:344px;transform:scale(0.985,0.955);transform-origin:0 0;" width="32" height="26" viewBox="0 0 32 26"><path d="M3.6 21.4V4.8a1.6 1.6 0 0 1 1.6-1.6h7.2a2 2 0 0 1 1.6.8l1.2 1.6h11.4a1.6 1.6 0 0 1 1.6 1.6V21.4a1.6 1.6 0 0 1-1.6 1.6H5.2a1.6 1.6 0 0 1-1.6-1.6Z" fill="none" stroke="#d7d7da" stroke-width="1.3" stroke-linejoin="round"/></svg>
<span class="t m" style="left:977.20px;top:349.240px;font-size:15.12px;line-height:15.12px;color:#f2f2f4;transform:translate(0,0.50px) scaleX(0.8366) rotate(0.05deg);word-spacing:1.6px;">HF AUDIO LOOPS</span>
<svg class="b" style="left:939px;top:389px;transform:scale(0.985,0.955);transform-origin:0 0;" width="32" height="26" viewBox="0 0 32 26"><path d="M3.6 21.4V4.8a1.6 1.6 0 0 1 1.6-1.6h7.2a2 2 0 0 1 1.6.8l1.2 1.6h11.4a1.6 1.6 0 0 1 1.6 1.6V21.4a1.6 1.6 0 0 1-1.6 1.6H5.2a1.6 1.6 0 0 1-1.6-1.6Z" fill="none" stroke="#d7d7da" stroke-width="1.3" stroke-linejoin="round"/></svg>
<span class="t m" style="left:977.20px;top:394.240px;font-size:15.12px;line-height:15.12px;color:#f2f2f4;transform:translate(0,0.50px) scaleX(0.8428) rotate(0.05deg);word-spacing:1.6px;">HF AUDIO SNARES &amp; PERCS</span>
<svg class="b" style="left:939px;top:434px;transform:scale(0.985,0.955);transform-origin:0 0;" width="32" height="26" viewBox="0 0 32 26"><path d="M3.6 21.4V4.8a1.6 1.6 0 0 1 1.6-1.6h7.2a2 2 0 0 1 1.6.8l1.2 1.6h11.4a1.6 1.6 0 0 1 1.6 1.6V21.4a1.6 1.6 0 0 1-1.6 1.6H5.2a1.6 1.6 0 0 1-1.6-1.6Z" fill="none" stroke="#d7d7da" stroke-width="1.3" stroke-linejoin="round"/></svg>
<span class="t m" style="left:977.20px;top:439.240px;font-size:15.12px;line-height:15.12px;color:#f2f2f4;transform:translate(0,0.50px) scaleX(0.8417) rotate(0.05deg);word-spacing:1.6px;">HF AUDIO SOUNDS</span>
<svg class="b" style="left:939px;top:479px;transform:scale(0.985,0.955);transform-origin:0 0;" width="32" height="26" viewBox="0 0 32 26"><path d="M3.6 21.4V4.8a1.6 1.6 0 0 1 1.6-1.6h7.2a2 2 0 0 1 1.6.8l1.2 1.6h11.4a1.6 1.6 0 0 1 1.6 1.6V21.4a1.6 1.6 0 0 1-1.6 1.6H5.2a1.6 1.6 0 0 1-1.6-1.6Z" fill="none" stroke="#d7d7da" stroke-width="1.3" stroke-linejoin="round"/></svg>
<span class="t m" style="left:977.20px;top:484.240px;font-size:15.12px;line-height:15.12px;color:#f2f2f4;transform:translate(0,0.50px) scaleX(0.8544) rotate(0.05deg);word-spacing:1.6px;">HF PRESETS</span>
<div class="b" style="left:929px;top:952px;width:407px;height:46px;background:#201f24;"></div>
<div class="b" style="left:937px;top:961px;width:30px;height:29.5px;background:#929294;border-radius:5px"></div>
<svg class="b" style="left:937px;top:961px;" width="30" height="30" viewBox="0 0 30 30"><g fill="none" stroke="#2b2b2e" stroke-width="1.05"><path d="M7.4 17V15.4a7.6 7.6 0 0 1 15.2 0V17"/><path d="M7.4 21.6V16.4H9.4a1.8 1.8 0 0 1 1.8 1.8V19.8a1.8 1.8 0 0 1 -1.8 1.8Z"/><path d="M22.6 21.6V16.4H20.6a1.8 1.8 0 0 0 -1.8 1.8V19.8a1.8 1.8 0 0 0 1.8 1.8Z"/></g></svg>
<svg class="b" style="left:985px;top:962px;" width="28" height="28" viewBox="0 0 28 28"><path d="M4.6 4.2L21.6 14.2L4.6 24.2Z" fill="none" stroke="#f2f2f4" stroke-width="1.25" stroke-linejoin="miter"/></svg>
<div class="b" style="left:1020px;top:975px;width:256px;height:1px;background:#b9b9bc;"></div>
<svg class="b" style="left:1288.0px;top:954.6px;" width="52" height="52" viewBox="0 0 52 52"><defs><clipPath id="k1314_980"><circle cx="26.0" cy="26.0" r="9.8"/></clipPath></defs><circle cx="28.2" cy="29.4" r="20.8" fill="url(#ks2)"/><circle cx="26.0" cy="25.6" r="15.8" fill="#232327"/><circle cx="27.8" cy="29.6" r="14.8" fill="url(#ks)"/><circle cx="26.0" cy="26.0" r="9.8" fill="url(#kc)"/><g clip-path="url(#k1314_980)"><g filter="url(#kb)" fill="#fff"><path d="M26.0 26.0L30.05 15.99A10.8 10.8 0 0 1 35.87 21.61Z" opacity=".085"/><path d="M26.0 26.0L29.69 36.15A10.8 10.8 0 0 1 22.31 36.15Z" opacity=".07"/><path d="M26.0 26.0L20.28 35.16A10.8 10.8 0 0 1 16.13 30.39Z" opacity=".05"/><path d="M26.0 26.0L15.85 22.31A10.8 10.8 0 0 1 20.60 16.65Z" opacity=".035"/><path d="M26.0 26.0L36.76 26.94A10.8 10.8 0 0 1 32.94 34.27Z" fill="#000" opacity=".18"/></g></g><path d="M17.07 29.25A9.5 9.5 0 0 1 27.65 16.64" fill="none" stroke="#fff" stroke-opacity=".2" stroke-width="0.7"/><path d="M14.40 37.60A16.4 16.4 0 0 1 26.00 9.60" fill="none" stroke="#f6f6f8" stroke-width="1.8"/><path d="M26.00 27.00L26.00 20.80" stroke="#e6e6e8" stroke-width="1.6" fill="none"/></svg>
</div>
<div class="b" style="left:0;top:0;width:1280px;height:960px;border-radius:10px;box-shadow:inset 0 0 0 1px rgba(255,255,255,.16);"></div>
</div>
</body></html>
